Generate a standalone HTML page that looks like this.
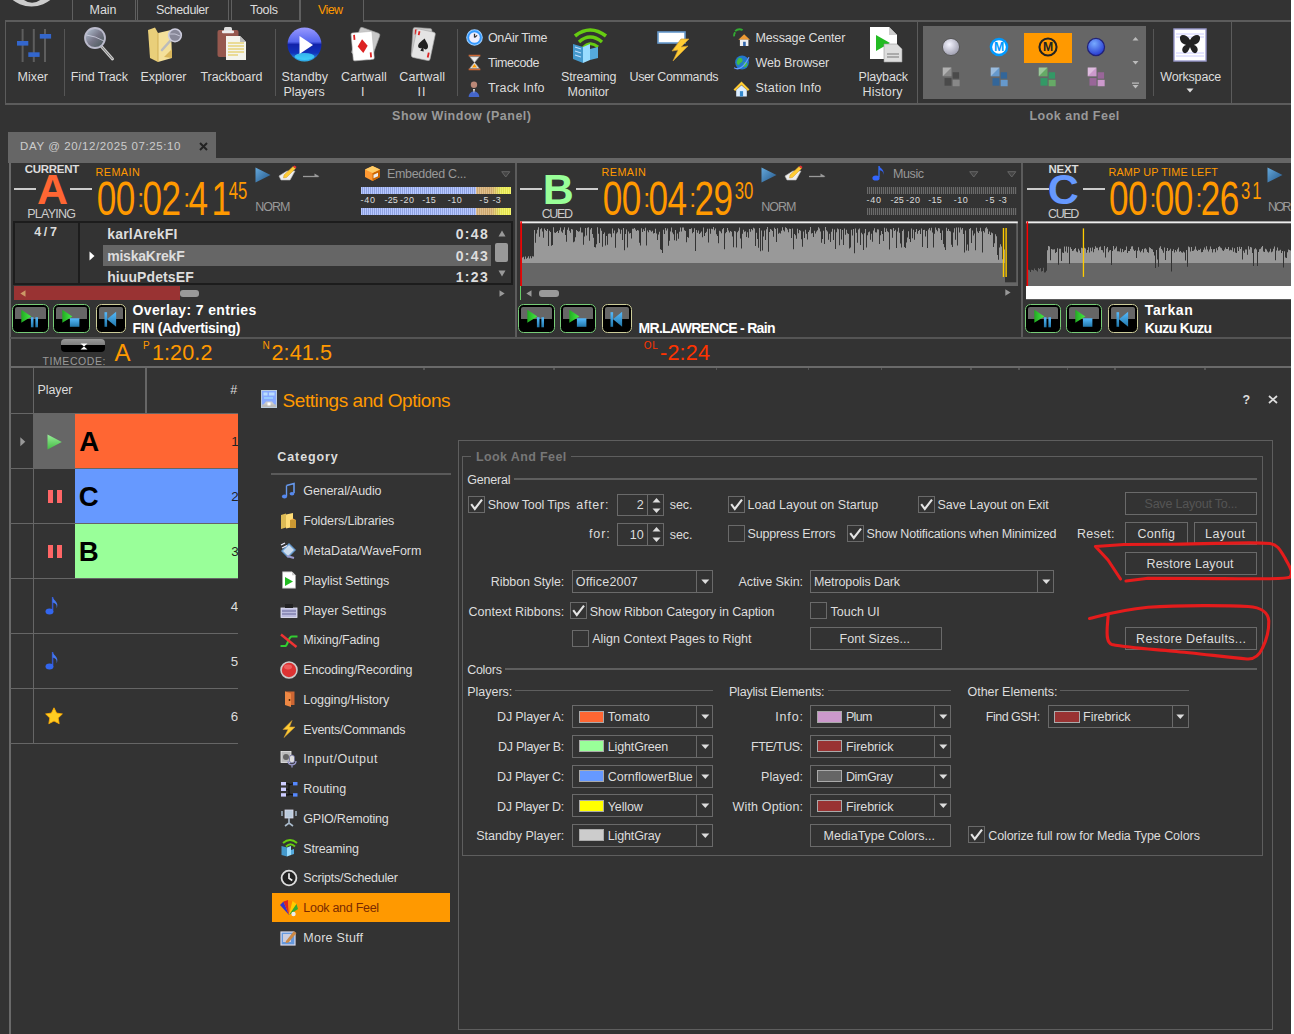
<!DOCTYPE html>
<html lang="en"><head><meta charset="utf-8"><title>Settings and Options</title>
<style>
html,body{margin:0;padding:0}
body{width:1294px;height:1034px;overflow:hidden;background:#333;position:relative;font-family:"Liberation Sans",sans-serif;font-size:12px;color:#ddd}
.a{position:absolute;box-sizing:border-box}
.t{position:absolute;white-space:nowrap}
svg{overflow:visible}
</style></head>
<body>
<!-- ribbon -->
<svg class="a" style="left:0px;top:0px;" width="70" height="10" viewBox="0 0 70 10"><circle cx="31.5" cy="-23.8" r="30.3" fill="#ccc"/><circle cx="32.1" cy="-10.8" r="13.5" fill="#333"/></svg><div class="a" style="left:72px;top:-2px;width:64px;height:23px;border:1px solid #606060;"></div><div class="a" style="left:137px;top:-2px;width:92px;height:23px;border:1px solid #606060;"></div><div class="a" style="left:231px;top:-2px;width:69px;height:23px;border:1px solid #606060;"></div><div class="a" style="left:299.5px;top:-2px;width:64px;height:24px;background:#333;border:1px solid #606060;border-bottom:none;z-index:2"></div><div class="a" style="left:5px;top:20px;width:1300px;height:85px;border:1px solid #666;border-width:2px 0 2px 1px;border-color:#5c5c5c"></div><div class="a" style="left:300.5px;top:20px;width:62px;height:2px;background:#333;z-index:3"></div><span class="t" style="left:89.50px;top:3.72px;font-size:12.5px;line-height:12.5px;color:#ddd;letter-spacing:-0.032px;">Main</span><span class="t" style="left:156.00px;top:3.72px;font-size:12.5px;line-height:12.5px;color:#ddd;letter-spacing:-0.411px;">Scheduler</span><span class="t" style="left:250.00px;top:3.72px;font-size:12.5px;line-height:12.5px;color:#ddd;letter-spacing:-0.295px;">Tools</span><span class="t" style="left:318.00px;top:3.72px;font-size:12.5px;line-height:12.5px;color:#f90;letter-spacing:-0.623px;z-index:4">View</span><div class="a" style="left:917px;top:21px;width:1px;height:83px;background:#5c5c5c;"></div><div class="a" style="left:1231px;top:21px;width:1px;height:83px;background:#5c5c5c;"></div><div class="a" style="left:64px;top:29px;width:1px;height:67px;background:#555;"></div><div class="a" style="left:275px;top:29px;width:1px;height:67px;background:#555;"></div><div class="a" style="left:457px;top:29px;width:1px;height:67px;background:#555;"></div><div class="a" style="left:1153px;top:29px;width:1px;height:67px;background:#555;"></div><svg class="a" style="left:17px;top:28px;" width="35" height="35" viewBox="0 0 35 35"><g><rect x="4.6" y="1" width="2" height="33" fill="#5e5e5e"/><rect x="15.8" y="1" width="2" height="33" fill="#5e5e5e"/><rect x="27" y="1" width="2" height="33" fill="#5e5e5e"/><rect x="0" y="13" width="11.3" height="4.6" fill="#36c"/><rect x="11.3" y="24.3" width="11.3" height="4.6" fill="#36c"/><rect x="22.8" y="6" width="11.3" height="4.6" fill="#36c"/></g></svg><span class="t" style="left:17.50px;top:71.12px;font-size:12.5px;line-height:12.5px;color:#ddd;letter-spacing:-0.014px;">Mixer</span><svg class="a" style="left:83px;top:27px;" width="32" height="32" viewBox="0 0 32 32"><defs><linearGradient id="fl" x1="0" y1="0" x2="1" y2="1"><stop offset="0" stop-color="#bcd"/><stop offset=".5" stop-color="#778"/><stop offset="1" stop-color="#455"/></linearGradient></defs><path d="M18 19 L29.5 32" stroke="#ccc" stroke-width="3" stroke-linecap="round"/><path d="M18 19 L29.5 32" stroke="#777" stroke-width="1"/><circle cx="12" cy="11" r="10" fill="url(#fl)" stroke="#bbc" stroke-width="1.8"/><path d="M3.5 8 Q12 9 21 14" fill="none" stroke="#dde" stroke-width="1" opacity=".7"/></svg><span class="t" style="left:70.80px;top:71.12px;font-size:12.5px;line-height:12.5px;color:#ddd;letter-spacing:-0.128px;">Find Track</span><svg class="a" style="left:147px;top:27px;" width="36" height="36" viewBox="0 0 36 36"><path d="M1 3 L8 0.5 L11 6 L11 35 L3 31z" fill="#e9cf7a"/><path d="M11 6 L24 3 L25 31 L11 35z" fill="#f4e09a"/><path d="M11 6V35" stroke="#c9a64a" stroke-width=".8"/><path d="M17 30 L25 31 25 22z" fill="#d9b65a"/><path d="M15 23 L24 13" stroke="#bbb" stroke-width="2.6" stroke-linecap="round"/><circle cx="28" cy="8.3" r="6.3" fill="#889" stroke="#ccd" stroke-width="1.6"/><path d="M23 7Q28 6 33 9" fill="none" stroke="#dde" stroke-width="1" opacity=".7"/></svg><span class="t" style="left:140.50px;top:71.12px;font-size:12.5px;line-height:12.5px;color:#ddd;letter-spacing:-0.078px;">Explorer</span><svg class="a" style="left:216px;top:27px;" width="32" height="32" viewBox="0 0 32 32"><rect x="1.5" y="3" width="21" height="27" rx="2" fill="#96584e"/><rect x="8" y="0" width="8" height="5" rx="1.5" fill="#ddd"/><rect x="6" y="3.6" width="12" height="2.6" rx="1" fill="#eee"/><path d="M10 9 H24 L30 15 V33 H10z" fill="#f4f4ec"/><path d="M24 9 V15 H30z" fill="#bbb"/><path d="M12 16H28M12 19H28M12 22H28M12 25H28M12 28H22" stroke="#e6d27a" stroke-width="1.6"/></svg><span class="t" style="left:200.50px;top:71.12px;font-size:12.5px;line-height:12.5px;color:#ddd;letter-spacing:-0.084px;">Trackboard</span><svg class="a" style="left:287px;top:27px;" width="35" height="35" viewBox="0 0 35 35"><defs><linearGradient id="sb" x1="0" y1="0" x2="0" y2="1"><stop offset="0" stop-color="#99f"/><stop offset=".42" stop-color="#56e"/><stop offset=".5" stop-color="#12a"/><stop offset=".75" stop-color="#13b"/><stop offset="1" stop-color="#3be"/></linearGradient></defs><circle cx="17.5" cy="17.5" r="17" fill="url(#sb)"/><ellipse cx="17.5" cy="29.5" rx="10" ry="3.5" fill="#4df" opacity=".75"/><path d="M12.5 9 L26 18 L12.5 27z" fill="#fff"/></svg><span class="t" style="left:281.50px;top:71.12px;font-size:12.5px;line-height:12.5px;color:#ddd;letter-spacing:0.122px;">Standby</span><span class="t" style="left:283.50px;top:85.92px;font-size:12.5px;line-height:12.5px;color:#ddd;letter-spacing:-0.080px;">Players</span><svg class="a" style="left:347px;top:27px;" width="34" height="34" viewBox="0 0 34 34"><g transform="rotate(20 17 17)"><rect x="8" y="2" width="21" height="28" rx="2" fill="#c8c8c8" stroke="#999" stroke-width=".6"/></g><g transform="rotate(-5 17 17)"><rect x="5" y="5" width="21" height="28" rx="1.5" fill="#fff" stroke="#bbb" stroke-width=".6"/><path d="M15.5 12 L20.5 19 L15.5 26 L10.5 19z" fill="#d22"/><rect x="7" y="7" width="1.8" height="5" fill="#d22"/><rect x="22" y="26" width="1.8" height="5" fill="#d22"/></g></svg><span class="t" style="left:341.00px;top:71.12px;font-size:12.5px;line-height:12.5px;color:#ddd;letter-spacing:0.107px;">Cartwall</span><span class="t" style="left:361.00px;top:85.92px;font-size:12.5px;line-height:12.5px;color:#ddd;">I</span><svg class="a" style="left:405px;top:27px;" width="34" height="34" viewBox="0 0 34 34"><g transform="rotate(4 17 17)"><rect x="7" y="1" width="19" height="29" rx="2" fill="#ccc" stroke="#999" stroke-width=".6"/><rect x="9" y="3" width="1.8" height="5" fill="#d22"/></g><g transform="rotate(12 17 17)"><rect x="9" y="3" width="19" height="29" rx="2" fill="#e4e4e4" stroke="#aaa" stroke-width=".6"/><path d="M18.5 11 C21 14.5 23.5 16 23.5 19 C23.5 21.8 20.5 22.3 19.3 20.6 L20.2 24 H16.8 L17.7 20.6 C16.5 22.3 13.5 21.8 13.5 19 C13.5 16 16 14.5 18.5 11z" fill="#222"/><rect x="24.5" y="24" width="1.8" height="5" fill="#d22"/><rect x="11" y="5" width="1.8" height="4" fill="#d22"/></g></svg><span class="t" style="left:399.30px;top:71.12px;font-size:12.5px;line-height:12.5px;color:#ddd;letter-spacing:0.093px;">Cartwall</span><span class="t" style="left:417.50px;top:85.92px;font-size:12.5px;line-height:12.5px;color:#ddd;letter-spacing:1.055px;">II</span><svg class="a" style="left:465.5px;top:29.1px;" width="17" height="17" viewBox="0 0 16 16"><circle cx="8" cy="8" r="7.3" fill="#39f" stroke="#9cf" stroke-width="1"/><circle cx="8" cy="8" r="5" fill="#eef"/><path d="M8 8V4.5M8 8L10.5 6" stroke="#333" stroke-width="1.2"/></svg><span class="t" style="left:487.90px;top:31.62px;font-size:12.5px;line-height:12.5px;color:#ddd;letter-spacing:-0.324px;">OnAir Time</span><svg class="a" style="left:465.5px;top:54.2px;" width="17" height="17" viewBox="0 0 16 16"><path d="M2.5 1.5H13.5M2.5 14.5H13.5" stroke="#c63" stroke-width="1.6"/><path d="M3.5 2.5H12.5L8 8 12.5 13.5H3.5L8 8z" fill="#eee" stroke="#999" stroke-width=".7"/><path d="M5.5 12.8L8 9.5 10.5 12.8z" fill="#f90"/></svg><span class="t" style="left:487.90px;top:56.72px;font-size:12.5px;line-height:12.5px;color:#ddd;letter-spacing:-0.403px;">Timecode</span><svg class="a" style="left:465.5px;top:79.5px;" width="17" height="17" viewBox="0 0 16 16"><circle cx="7.5" cy="4.5" r="3" fill="#b87"/><path d="M2.5 16 C2.5 9 12.5 9 12.5 16z" fill="#46c"/><path d="M6.5 8.5h2l-1 4z" fill="#ddd"/></svg><span class="t" style="left:487.90px;top:82.02px;font-size:12.5px;line-height:12.5px;color:#ddd;letter-spacing:0.166px;">Track Info</span><svg class="a" style="left:571px;top:27px;" width="38" height="36" viewBox="0 0 38 36"><path d="M4 9 Q19 -3 35 9" fill="none" stroke="#6c1" stroke-width="3.6"/><path d="M8 15 Q19 5 31 15" fill="none" stroke="#6c1" stroke-width="3.4"/><path d="M12 21 Q19 13 27 20" fill="none" stroke="#6c1" stroke-width="3"/><path d="M2 17 L12 20 V36 L2 32z" fill="#49c"/><path d="M12 20 L19 17 V33 L12 36z" fill="#9df"/><path d="M19 22 L27 20 V31 L19 33z" fill="#5ad"/><path d="M4 20l6 2M4 24l6 2M4 28l6 2" stroke="#bdf" stroke-width="1.2"/></svg><span class="t" style="left:561.00px;top:71.12px;font-size:12.5px;line-height:12.5px;color:#ddd;letter-spacing:-0.184px;">Streaming</span><span class="t" style="left:567.50px;top:85.92px;font-size:12.5px;line-height:12.5px;color:#ddd;letter-spacing:-0.030px;">Monitor</span><svg class="a" style="left:657px;top:31px;" width="34" height="30" viewBox="0 0 34 30"><rect x="1" y="1" width="27" height="11" fill="#fff" stroke="#69c" stroke-width="1.6"/><path d="M24 8 L15 20 L21 19 L16 30 L31 15 L24 16 L32 8z" fill="#fc3" stroke="#c93" stroke-width=".7"/></svg><span class="t" style="left:629.50px;top:71.12px;font-size:12.5px;line-height:12.5px;color:#ddd;letter-spacing:-0.398px;">User Commands</span><svg class="a" style="left:733px;top:29.1px;" width="17" height="17" viewBox="0 0 16 16"><path d="M2 2 A6 6 0 0 1 9 1" fill="none" stroke="#3a3" stroke-width="1.8"/><path d="M1 7 A6 6 0 0 1 2 3" fill="none" stroke="#3a3" stroke-width="1.8"/><path d="M5 10 L10.5 5 L16 10z" fill="#e93"/><rect x="6.5" y="10" width="8" height="6" fill="#eee"/><rect x="9.5" y="12" width="2.5" height="4" fill="#36a"/></svg><span class="t" style="left:755.50px;top:31.62px;font-size:12.5px;line-height:12.5px;color:#ddd;letter-spacing:-0.147px;">Message Center</span><svg class="a" style="left:733px;top:54.2px;" width="17" height="17" viewBox="0 0 16 16"><circle cx="8.5" cy="8" r="6.5" fill="#27c"/><path d="M5 4 C7 3 9 4 9 6 C9 8 6 8 6 10 C5 11 3 9 3.5 7z M10 8 C12 7 14 8 13.5 10 C13 12 11 13 10 12z" fill="#4b4"/><path d="M1 13 Q8 17 15 3" fill="none" stroke="#69f" stroke-width="1.2"/></svg><span class="t" style="left:755.50px;top:56.72px;font-size:12.5px;line-height:12.5px;color:#ddd;letter-spacing:-0.109px;">Web Browser</span><svg class="a" style="left:733px;top:79.5px;" width="17" height="17" viewBox="0 0 16 16"><path d="M0.5 9 L8 1.5 L15.5 9 L14 10.3 L8 4.5 L2 10.3z" fill="#fc3"/><path d="M3 9.5 L8 5 L13 9.5 V15.5 H3z" fill="#def"/><rect x="6.5" y="10.5" width="3" height="5" fill="#38c"/></svg><span class="t" style="left:755.50px;top:82.02px;font-size:12.5px;line-height:12.5px;color:#ddd;letter-spacing:0.233px;">Station Info</span><svg class="a" style="left:869px;top:26px;" width="34" height="37" viewBox="0 0 34 37"><path d="M1 1 H20 L28 9 V33 H1z" fill="#fff"/><path d="M20 1 V9 H28z" fill="#ccc"/><path d="M7 9 L21 17 L7 25z" fill="#2b2"/><path d="M15 18 H28 L33 23 V36 H15z" fill="#ddd" stroke="#999" stroke-width=".6"/><path d="M18 28H30M18 31H30" stroke="#999" stroke-width="1.4"/></svg><span class="t" style="left:858.50px;top:71.12px;font-size:12.5px;line-height:12.5px;color:#ddd;letter-spacing:-0.175px;">Playback</span><span class="t" style="left:862.50px;top:85.92px;font-size:12.5px;line-height:12.5px;color:#ddd;letter-spacing:0.185px;">History</span><div class="a" style="left:923px;top:25.5px;width:223px;height:73.5px;background:#666;"></div><div class="a" style="left:1023.5px;top:33px;width:48.5px;height:29.5px;background:#f90;"></div><svg class="a" style="left:940px;top:36.3px;" width="22" height="22" viewBox="0 0 18 18"><defs><radialGradient id="gs" cx=".4" cy=".35" r=".7"><stop offset="0" stop-color="#f4f4ff"/><stop offset="1" stop-color="#99a"/></radialGradient></defs><circle cx="9" cy="9" r="7" fill="url(#gs)" stroke="#555" stroke-width=".8"/></svg><svg class="a" style="left:940.5px;top:67px;" width="21" height="21" viewBox="0 0 18 18"><rect x="1.5" y="0.5" width="7.5" height="7.5" fill="#888"/><path d="M1.5 .5h7.5L1.5 8z" fill="#fff" opacity=".35"/><rect x="10" y="4.5" width="5.5" height="5.5" fill="#4a4a4a"/><rect x="3" y="9.5" width="6" height="6.5" fill="#4a4a4a"/><rect x="10" y="11" width="6" height="5.5" fill="#888"/></svg><svg class="a" style="left:988px;top:36.3px;" width="22" height="22" viewBox="0 0 18 18"><circle cx="9" cy="9" r="7.6" fill="#09f"/><circle cx="9" cy="9" r="5.6" fill="#fff"/><text x="9" y="12.6" text-anchor="middle" font-family="Liberation Sans, sans-serif" font-weight="bold" font-size="10" fill="#09f">M</text></svg><svg class="a" style="left:988.5px;top:67px;" width="21" height="21" viewBox="0 0 18 18"><rect x="1.5" y="0.5" width="7.5" height="7.5" fill="#69c"/><path d="M1.5 .5h7.5L1.5 8z" fill="#fff" opacity=".35"/><rect x="10" y="4.5" width="5.5" height="5.5" fill="#369"/><rect x="3" y="9.5" width="6" height="6.5" fill="#369"/><rect x="10" y="11" width="6" height="5.5" fill="#69c"/></svg><svg class="a" style="left:1036.5px;top:36.3px;" width="22" height="22" viewBox="0 0 18 18"><circle cx="9" cy="9" r="7" fill="none" stroke="#222" stroke-width="1.7"/><text x="9" y="12.6" text-anchor="middle" font-family="Liberation Sans, sans-serif" font-weight="bold" font-size="10" fill="#222">M</text></svg><svg class="a" style="left:1037px;top:67px;" width="21" height="21" viewBox="0 0 18 18"><rect x="1.5" y="0.5" width="7.5" height="7.5" fill="#6a6"/><path d="M1.5 .5h7.5L1.5 8z" fill="#fff" opacity=".35"/><rect x="10" y="4.5" width="5.5" height="5.5" fill="#396"/><rect x="3" y="9.5" width="6" height="6.5" fill="#396"/><rect x="10" y="11" width="6" height="5.5" fill="#6a6"/></svg><svg class="a" style="left:1085px;top:36.3px;" width="22" height="22" viewBox="0 0 18 18"><defs><radialGradient id="gb" cx=".4" cy=".3" r=".75"><stop offset="0" stop-color="#7af"/><stop offset="1" stop-color="#23c"/></radialGradient></defs><circle cx="9" cy="9" r="7" fill="url(#gb)" stroke="#227" stroke-width="1"/></svg><svg class="a" style="left:1085.5px;top:67px;" width="21" height="21" viewBox="0 0 18 18"><rect x="1.5" y="0.5" width="7.5" height="7.5" fill="#c9c"/><path d="M1.5 .5h7.5L1.5 8z" fill="#fff" opacity=".35"/><rect x="10" y="4.5" width="5.5" height="5.5" fill="#969"/><rect x="3" y="9.5" width="6" height="6.5" fill="#969"/><rect x="10" y="11" width="6" height="5.5" fill="#c9c"/></svg><svg class="a" style="left:1131px;top:34px;" width="9" height="56" viewBox="0 0 9 56"><path d="M1.5 6.5 L4.5 3 L7.5 6.5Z M1.5 27 L4.5 30.5 L7.5 27Z M1 48.5h7v1.2h-7z M1.5 51 L4.5 54.5 L7.5 51Z" fill="#bbb"/></svg><svg class="a" style="left:1173px;top:28px;" width="34" height="34" viewBox="0 0 34 34"><rect x="1" y="1" width="32" height="32" fill="#fff" stroke="#99c" stroke-width="1.4"/><path d="M3 6H31M3 9H31M3 25H31M3 28H31" stroke="#ccf" stroke-width="1"/><path d="M17 12 C14 6 6 5 7 11 C7.5 15 11 16 13 17 C9 18 8 23 11 25 C14 26 16 22 17 19 C18 22 20 26 23 25 C26 23 25 18 21 17 C23 16 26.5 15 27 11 C28 5 20 6 17 12z" fill="#222"/></svg><span class="t" style="left:1160.30px;top:71.12px;font-size:12.5px;line-height:12.5px;color:#ddd;letter-spacing:-0.174px;">Workspace</span><svg class="a" style="left:1186px;top:88px;" width="8" height="5" viewBox="0 0 8 5"><path d="M0.5 0.5h7L4 4.5z" fill="#ddd"/></svg><span class="t" style="left:392.10px;top:110.42px;font-size:12.5px;line-height:12.5px;color:#999;font-weight:bold;letter-spacing:0.509px;">Show Window (Panel)</span><span class="t" style="left:1029.50px;top:110.42px;font-size:12.5px;line-height:12.5px;color:#999;font-weight:bold;letter-spacing:0.480px;">Look and Feel</span><div class="a" style="left:8px;top:132px;width:208px;height:27px;background:#666;"></div><div class="a" style="left:8px;top:158.3px;width:1283px;height:5px;background:#666;"></div><span class="t" style="left:20.10px;top:141.07px;font-size:11.5px;line-height:11.5px;color:#ccc;letter-spacing:0.593px;">DAY @ 20/12/2025 07:25:10</span><svg class="a" style="left:198.5px;top:142px;" width="9" height="9" viewBox="0 0 9 9"><path d="M1 1L8 8M8 1L1 8" stroke="#222" stroke-width="2"/></svg>
<!-- players -->
<div class="a" style="left:9.2px;top:163px;width:1.6px;height:871px;background:#6a6a6a;"></div><div class="a" style="left:514.8px;top:163px;width:1.8px;height:175px;background:#5c5c5c;"></div><div class="a" style="left:1020.9px;top:163px;width:1.8px;height:175px;background:#5c5c5c;"></div><div class="a" style="left:10px;top:337px;width:1281px;height:2px;background:#555;"></div><div class="a" style="left:10px;top:366px;width:1281px;height:2px;background:#6a6a6a;"></div><div class="a" style="left:423px;top:368px;width:1.5px;height:1.5px;background:#555;"></div><div class="a" style="left:553px;top:368px;width:1.5px;height:1.5px;background:#555;"></div><div class="a" style="left:715.5px;top:368px;width:1.5px;height:1.5px;background:#555;"></div><div class="a" style="left:807.7px;top:368px;width:1.5px;height:1.5px;background:#555;"></div><div class="a" style="left:880.7px;top:368px;width:1.5px;height:1.5px;background:#555;"></div><div class="a" style="left:970.3px;top:368px;width:1.5px;height:1.5px;background:#555;"></div><div class="a" style="left:1018px;top:368px;width:1.5px;height:1.5px;background:#555;"></div><div class="a" style="left:1066.6px;top:368px;width:1.5px;height:1.5px;background:#555;"></div><div class="a" style="left:1114.4px;top:368px;width:1.5px;height:1.5px;background:#555;"></div><div class="a" style="left:1204px;top:368px;width:1.5px;height:1.5px;background:#555;"></div><div class="a" style="left:13.6px;top:188.3px;width:22.4px;height:1.6px;background:#ccc;"></div><div class="a" style="left:70px;top:188.3px;width:21.5px;height:1.6px;background:#ccc;"></div><span class="t" style="left:24.80px;top:164.27px;font-size:11.5px;line-height:11.5px;color:#ddd;font-weight:bold;letter-spacing:-0.287px;z-index:2">CURRENT</span><span class="t" style="left:37.00px;top:168.10px;font-size:43px;line-height:43px;color:#f63;font-weight:bold;">A</span><span class="t" style="left:27.20px;top:207.92px;font-size:12.5px;line-height:12.5px;color:#ccc;letter-spacing:-0.743px;">PLAYING</span><span class="t" style="left:95.50px;top:166.66px;font-size:10.8px;line-height:10.8px;color:#f90;letter-spacing:0.439px;">REMAIN</span><svg class="a" style="left:0;top:0" width="1291" height="340" font-family="Liberation Sans, sans-serif"><text transform="translate(96.82 214.80) scale(1 1.349)" font-size="35.2" letter-spacing="-0.6" fill="#f90">00</text><text transform="translate(137.33 207.00) scale(1 1.000)" font-size="25" letter-spacing="0" fill="#f90">:</text><text transform="translate(142.62 214.80) scale(1 1.349)" font-size="35.2" letter-spacing="-0.6" fill="#f90">02</text><text transform="translate(183.33 207.00) scale(1 1.000)" font-size="25" letter-spacing="0" fill="#f90">:</text><text transform="translate(188.62 214.80) scale(1 1.349)" font-size="35.2" letter-spacing="-0.6" fill="#f90">4<tspan dx="4.0">1</tspan></text><text transform="translate(228.80 198.80) scale(1 1.380)" font-size="16.7" letter-spacing="0" fill="#f90">45</text></svg><svg class="a" style="left:255px;top:167px;" width="16" height="16" viewBox="0 0 16 16"><defs><linearGradient id="pb" x1="0" y1="0" x2="1" y2="1"><stop offset="0" stop-color="#6ad"/><stop offset="1" stop-color="#258"/></linearGradient></defs><path d="M.5 .5L15.5 8 .5 15.5z" fill="url(#pb)"/></svg><svg class="a" style="left:278px;top:165px;" width="19" height="17" viewBox="0 0 19 17"><path d="M1 11L9 6H17L12 15H3z" fill="#eee" stroke="#bbb" stroke-width=".6"/><path d="M6 10L15 1.5 17.5 3.5 8.5 12.5 5.5 13z" fill="#fc3" stroke="#c93" stroke-width=".5"/><path d="M15 1.5L17.5 3.5 18.5 2 16.5 .5z" fill="#e33"/></svg><svg class="a" style="left:303px;top:171px;" width="17" height="8" viewBox="0 0 17 8"><path d="M0 5.5H15.5" stroke="#999" stroke-width="1.3"/><path d="M11.5 2.5L16.5 5.5H11.5z" fill="#999"/></svg><span class="t" style="left:255.30px;top:201.42px;font-size:12.5px;line-height:12.5px;color:#999;letter-spacing:-1.063px;">NORM</span><svg class="a" style="left:364px;top:164.5px;" width="17" height="17" viewBox="0 0 17 17"><path d="M8.5 1L16 4.5V12L8.5 16 1 12V4.5z" fill="#f93"/><path d="M8.5 8L16 4.5V12L8.5 16z" fill="#c60"/><path d="M1 4.5L8.5 8 16 4.5 8.5 1z" fill="#fc6"/><rect x="9.5" y="9" width="4.5" height="3.5" fill="#eee" transform="skewY(-25) translate(0 5.3)"/></svg><span class="t" style="left:386.90px;top:168.22px;font-size:12.5px;line-height:12.5px;color:#999;letter-spacing:-0.315px;">Embedded C...</span><div class="a" style="left:361px;top:187px;width:150px;height:7.4px;background:repeating-linear-gradient(90deg,#b8c8ff 0,#b8c8ff 1px,#8ea2e0 1px,#8ea2e0 2px)"></div><div class="a" style="left:476px;top:187px;width:35px;height:7.4px;background:repeating-linear-gradient(90deg,rgba(255,255,255,.18) 0,rgba(255,255,255,.18) 1px,rgba(0,0,0,.06) 1px,rgba(0,0,0,.06) 2px),linear-gradient(90deg,#d8b27c 0,#d8b070 45%,#ecec55 70%,#f4f450 100%)"></div><div class="a" style="left:361px;top:208px;width:150px;height:7.4px;background:repeating-linear-gradient(90deg,#b8c8ff 0,#b8c8ff 1px,#8ea2e0 1px,#8ea2e0 2px)"></div><div class="a" style="left:476px;top:208px;width:35px;height:7.4px;background:repeating-linear-gradient(90deg,rgba(255,255,255,.18) 0,rgba(255,255,255,.18) 1px,rgba(0,0,0,.06) 1px,rgba(0,0,0,.06) 2px),linear-gradient(90deg,#d8b27c 0,#d8b070 45%,#ecec55 70%,#f4f450 100%)"></div><span class="t" style="left:360.40px;top:195.98px;font-size:9px;line-height:9px;color:#ddd;letter-spacing:0.796px;">-40</span><span class="t" style="left:384.50px;top:195.98px;font-size:9px;line-height:9px;color:#ddd;letter-spacing:0.146px;">-25</span><span class="t" style="left:400.00px;top:195.98px;font-size:9px;line-height:9px;color:#ddd;letter-spacing:0.546px;">-20</span><span class="t" style="left:422.30px;top:195.98px;font-size:9px;line-height:9px;color:#ddd;letter-spacing:0.196px;">-15</span><span class="t" style="left:447.80px;top:195.98px;font-size:9px;line-height:9px;color:#ddd;letter-spacing:0.446px;">-10</span><span class="t" style="left:479.30px;top:195.98px;font-size:9px;line-height:9px;color:#ddd;letter-spacing:1.097px;">-5</span><span class="t" style="left:492.60px;top:195.98px;font-size:9px;line-height:9px;color:#ddd;letter-spacing:0.197px;">-3</span><svg class="a" style="left:500.5px;top:170.5px;" width="10" height="7" viewBox="0 0 10 7"><path d="M.7 .7H8.8L4.75 6z" fill="#444" stroke="#666" stroke-width="1"/></svg><div class="a" style="left:12.5px;top:220.8px;width:500.5px;height:64px;border:2px solid #1c1c1c;"></div><div class="a" style="left:78px;top:222px;width:2px;height:62px;background:#1c1c1c;"></div><span class="t" style="left:34.20px;top:226.42px;font-size:12.5px;line-height:12.5px;color:#ddd;font-weight:bold;letter-spacing:2.712px;">4/7</span><div class="a" style="left:103px;top:245px;width:388px;height:20.5px;background:#666;"></div><div class="a" style="left:80px;top:223px;width:432px;height:60px;overflow:hidden"><span class="t" style="left:27.20px;top:4.05px;font-size:14px;line-height:14px;color:#ddd;font-weight:bold;letter-spacing:0.202px;">karlArekFI</span><span class="t" style="left:375.70px;top:4.05px;font-size:14px;line-height:14px;color:#ddd;font-weight:bold;letter-spacing:1.326px;">0:48</span><span class="t" style="left:27.20px;top:26.15px;font-size:14px;line-height:14px;color:#ddd;font-weight:bold;letter-spacing:-0.209px;">miskaKrekF</span><span class="t" style="left:375.70px;top:26.15px;font-size:14px;line-height:14px;color:#ddd;font-weight:bold;letter-spacing:1.326px;">0:43</span><span class="t" style="left:27.20px;top:47.45px;font-size:14px;line-height:14px;color:#ddd;font-weight:bold;letter-spacing:0.094px;">hiuuPdetsEF</span><span class="t" style="left:375.70px;top:47.45px;font-size:14px;line-height:14px;color:#ddd;font-weight:bold;letter-spacing:1.326px;">1:23</span></div><svg class="a" style="left:88.5px;top:250.5px;" width="6" height="10" viewBox="0 0 6 10"><path d="M.5 .5L5.5 5 .5 9.5z" fill="#fff"/></svg><svg class="a" style="left:497.5px;top:229.5px;" width="8" height="7" viewBox="0 0 8 7"><path d="M4 .5L7.5 6.5H.5z" fill="#999"/></svg><div class="a" style="left:495px;top:242.5px;width:12.5px;height:19px;background:#999;border-radius:2px"></div><svg class="a" style="left:497.5px;top:270.3px;" width="8" height="7" viewBox="0 0 8 7"><path d="M.5 .5H7.5L4 6.5z" fill="#999"/></svg><div class="a" style="left:13.5px;top:286px;width:166.5px;height:13.5px;background:#933;"></div><svg class="a" style="left:20px;top:289.5px;" width="6" height="7" viewBox="0 0 6 7"><path d="M5.5 .3V6.7L.3 3.5z" fill="#c96"/></svg><div class="a" style="left:180px;top:290px;width:19px;height:6.5px;background:#999;border-radius:3px"></div><svg class="a" style="left:498.5px;top:289.5px;" width="6" height="7" viewBox="0 0 6 7"><path d="M.5 .3V6.7L5.7 3.5z" fill="#999"/></svg><div class="a" style="left:12px;top:304px;width:37px;height:29px;background:#000;border:1.3px solid #7c7;border-radius:5.5px"></div><div class="a" style="left:15px;top:306.6px;width:31px;height:12.2px;background:#666;border-radius:2px 2px 0 0"></div><svg class="a" style="left:12px;top:304px;" width="37" height="29" viewBox="0 0 37 29"><defs><linearGradient id="gpl" x1="0" y1="0" x2="1" y2="0"><stop offset="0" stop-color="#2a2"/><stop offset="1" stop-color="#4e4"/></linearGradient><linearGradient id="gbl" x1="0" y1="0" x2="0" y2="1"><stop offset="0" stop-color="#5bf"/><stop offset="1" stop-color="#27a"/></linearGradient></defs><path d="M9.3 5.7V18.8L19.4 12.6z" fill="url(#gpl)"/><rect x="18.9" y="13.3" width="2.6" height="10" fill="url(#gbl)"/><rect x="23.4" y="13.3" width="2.6" height="10" fill="url(#gbl)"/></svg><div class="a" style="left:53px;top:304px;width:37px;height:29px;background:#000;border:1.3px solid #7c7;border-radius:5.5px"></div><div class="a" style="left:56px;top:306.6px;width:31px;height:12.2px;background:#666;border-radius:2px 2px 0 0"></div><svg class="a" style="left:53px;top:304px;" width="37" height="29" viewBox="0 0 37 29"><path d="M9.3 5.7V18.8L19.4 12.6z" fill="url(#gpl)"/><rect x="16.9" y="14.3" width="9.5" height="8.5" fill="url(#gbl)"/></svg><div class="a" style="left:96px;top:304px;width:30px;height:29px;background:#000;border:1.3px solid #cc9;border-radius:5.5px"></div><div class="a" style="left:99px;top:306.6px;width:24px;height:12.2px;background:#666;border-radius:2px 2px 0 0"></div><svg class="a" style="left:96px;top:304px;" width="30" height="29" viewBox="0 0 30 29"><rect x="8.5" y="8.2" width="2.6" height="14.6" fill="url(#gbl)"/><path d="M20.1 7.7V22.8L11 15.3z" fill="url(#gbl)"/></svg><span class="t" style="left:132.50px;top:302.55px;font-size:14px;line-height:14px;color:#fff;font-weight:bold;letter-spacing:0.370px;">Overlay: 7 entries</span><span class="t" style="left:132.50px;top:320.65px;font-size:14px;line-height:14px;color:#fff;font-weight:bold;letter-spacing:-0.311px;">FIN (Advertising)</span><div class="a" style="left:519.6px;top:188.3px;width:22.4px;height:1.6px;background:#ccc;"></div><div class="a" style="left:576px;top:188.3px;width:21.5px;height:1.6px;background:#ccc;"></div><span class="t" style="left:542.80px;top:168.10px;font-size:43px;line-height:43px;color:#9f9;font-weight:bold;">B</span><span class="t" style="left:541.70px;top:207.92px;font-size:12.5px;line-height:12.5px;color:#ccc;letter-spacing:-1.340px;">CUED</span><span class="t" style="left:601.50px;top:166.66px;font-size:10.8px;line-height:10.8px;color:#f90;letter-spacing:0.439px;">REMAIN</span><svg class="a" style="left:0;top:0" width="1291" height="340" font-family="Liberation Sans, sans-serif"><text transform="translate(602.82 214.80) scale(1 1.349)" font-size="35.2" letter-spacing="-0.6" fill="#f90">00</text><text transform="translate(643.32 207.00) scale(1 1.000)" font-size="25" letter-spacing="0" fill="#f90">:</text><text transform="translate(648.62 214.80) scale(1 1.349)" font-size="35.2" letter-spacing="-0.6" fill="#f90">04</text><text transform="translate(689.32 207.00) scale(1 1.000)" font-size="25" letter-spacing="0" fill="#f90">:</text><text transform="translate(694.62 214.80) scale(1 1.349)" font-size="35.2" letter-spacing="-0.6" fill="#f90">29</text><text transform="translate(734.80 198.80) scale(1 1.380)" font-size="16.7" letter-spacing="0" fill="#f90">30</text></svg><svg class="a" style="left:761px;top:167px;" width="16" height="16" viewBox="0 0 16 16"><defs><linearGradient id="pb" x1="0" y1="0" x2="1" y2="1"><stop offset="0" stop-color="#6ad"/><stop offset="1" stop-color="#258"/></linearGradient></defs><path d="M.5 .5L15.5 8 .5 15.5z" fill="url(#pb)"/></svg><svg class="a" style="left:784px;top:165px;" width="19" height="17" viewBox="0 0 19 17"><path d="M1 11L9 6H17L12 15H3z" fill="#eee" stroke="#bbb" stroke-width=".6"/><path d="M6 10L15 1.5 17.5 3.5 8.5 12.5 5.5 13z" fill="#fc3" stroke="#c93" stroke-width=".5"/><path d="M15 1.5L17.5 3.5 18.5 2 16.5 .5z" fill="#e33"/></svg><svg class="a" style="left:809px;top:171px;" width="17" height="8" viewBox="0 0 17 8"><path d="M0 5.5H15.5" stroke="#999" stroke-width="1.3"/><path d="M11.5 2.5L16.5 5.5H11.5z" fill="#999"/></svg><span class="t" style="left:761.30px;top:201.42px;font-size:12.5px;line-height:12.5px;color:#999;letter-spacing:-1.063px;">NORM</span><svg class="a" style="left:870px;top:164.5px;" width="17" height="17" viewBox="0 0 17 17"><path d="M9 1V12" stroke="#36c" stroke-width="1.6"/><path d="M9 1C11 4 15 5 13 10C14 6 11 5.5 9 5z" fill="#36f"/><ellipse cx="6" cy="13" rx="3.6" ry="2.6" fill="#36f"/></svg><span class="t" style="left:892.90px;top:168.22px;font-size:12.5px;line-height:12.5px;color:#999;letter-spacing:-0.361px;">Music</span><div class="a" style="left:867px;top:187px;width:150px;height:7.4px;background:repeating-linear-gradient(90deg,#6a6a6a 0,#6a6a6a 1px,#3c3c3c 1px,#3c3c3c 2px)"></div><div class="a" style="left:867px;top:208px;width:150px;height:7.4px;background:repeating-linear-gradient(90deg,#6a6a6a 0,#6a6a6a 1px,#3c3c3c 1px,#3c3c3c 2px)"></div><span class="t" style="left:866.40px;top:195.98px;font-size:9px;line-height:9px;color:#ddd;letter-spacing:0.796px;">-40</span><span class="t" style="left:890.50px;top:195.98px;font-size:9px;line-height:9px;color:#ddd;letter-spacing:0.146px;">-25</span><span class="t" style="left:906.00px;top:195.98px;font-size:9px;line-height:9px;color:#ddd;letter-spacing:0.546px;">-20</span><span class="t" style="left:928.30px;top:195.98px;font-size:9px;line-height:9px;color:#ddd;letter-spacing:0.196px;">-15</span><span class="t" style="left:953.80px;top:195.98px;font-size:9px;line-height:9px;color:#ddd;letter-spacing:0.446px;">-10</span><span class="t" style="left:985.30px;top:195.98px;font-size:9px;line-height:9px;color:#ddd;letter-spacing:1.097px;">-5</span><span class="t" style="left:998.60px;top:195.98px;font-size:9px;line-height:9px;color:#ddd;letter-spacing:0.197px;">-3</span><svg class="a" style="left:969px;top:170.5px;" width="10" height="7" viewBox="0 0 10 7"><path d="M.7 .7H8.8L4.75 6z" fill="#444" stroke="#666" stroke-width="1"/></svg><svg class="a" style="left:1006.5px;top:170.5px;" width="10" height="7" viewBox="0 0 10 7"><path d="M.7 .7H8.8L4.75 6z" fill="#444" stroke="#666" stroke-width="1"/></svg><svg class="a" style="left:0;top:0" width="1291" height="300"><path d="M522 263V257.6h1V256.8h1V259.3h1V256.4h1V258.7h1V257.8h1V256.3h1V258.5h1V256.2h1V258.2h1V256.3h1V256.5h1V230.0h1V242.7h1V233.6h1V229.8h1V227.3h1V236.7h1V229.2h1V228.3h1V231.5h1V237.7h1V228.4h1V230.0h1V231.1h1V229.1h1V245.9h1V230.7h1V232.1h1V245.7h1V245.1h1V227.3h1V232.4h1V233.1h1V231.9h1V231.1h1V232.9h1V230.3h1V227.4h1V231.5h1V232.8h1V229.7h1V227.2h1V235.0h1V241.8h1V229.7h1V227.6h1V230.8h1V232.7h1V228.9h1V229.5h1V242.2h1V241.4h1V237.2h1V229.9h1V231.0h1V231.8h1V231.3h1V227.4h1V232.5h1V232.6h1V244.7h1V236.4h1V228.1h1V235.5h1V227.7h1V227.2h1V240.8h1V229.4h1V227.9h1V234.0h1V237.8h1V247.0h1V247.4h1V244.3h1V227.2h1V233.8h1V243.0h1V228.2h1V230.7h1V246.7h1V233.9h1V232.6h1V245.4h1V235.9h1V244.7h1V233.7h1V233.6h1V233.7h1V237.3h1V228.4h1V233.3h1V230.4h1V247.8h1V233.4h1V232.3h1V228.2h1V229.3h1V233.8h1V229.8h1V239.9h1V228.1h1V250.2h1V233.9h1V229.5h1V247.5h1V231.5h1V233.5h1V233.1h1V238.6h1V228.7h1V228.8h1V227.9h1V229.5h1V231.1h1V229.9h1V230.5h1V242.8h1V245.5h1V228.2h1V232.1h1V229.3h1V230.9h1V227.7h1V245.6h1V230.6h1V232.3h1V230.1h1V230.5h1V231.8h1V230.7h1V233.6h1V233.1h1V228.8h1V233.6h1V240.1h1V234.5h1V231.7h1V249.3h1V250.0h1V253.1h1V229.8h1V233.9h1V228.1h1V230.6h1V228.4h1V245.8h1V240.7h1V231.4h1V227.5h1V232.5h1V234.3h1V240.3h1V230.0h1V240.8h1V233.4h1V238.7h1V231.8h1V227.5h1V231.4h1V227.6h1V227.5h1V230.2h1V230.9h1V242.3h1V236.9h1V237.7h1V229.1h1V229.0h1V228.2h1V233.3h1V232.1h1V228.3h1V251.0h1V230.0h1V232.8h1V230.5h1V233.9h1V232.8h1V231.5h1V237.3h1V227.5h1V236.0h1V232.9h1V231.7h1V228.7h1V242.5h1V228.8h1V233.8h1V228.7h1V229.2h1V227.0h1V230.3h1V228.4h1V234.3h1V236.1h1V243.3h1V230.7h1V231.6h1V233.2h1V229.3h1V228.0h1V249.2h1V233.2h1V232.1h1V228.0h1V230.5h1V232.6h1V231.1h1V231.8h1V236.5h1V247.2h1V230.9h1V231.4h1V247.6h1V232.2h1V230.7h1V227.5h1V238.5h1V248.5h1V233.8h1V229.7h1V231.8h1V231.3h1V237.1h1V232.2h1V237.8h1V228.9h1V231.8h1V229.0h1V230.3h1V227.8h1V228.4h1V246.0h1V232.7h1V239.1h1V247.8h1V228.0h1V251.2h1V230.6h1V250.5h1V236.5h1V230.4h1V239.9h1V229.2h1V227.0h1V251.8h1V232.0h1V229.0h1V229.8h1V231.1h1V236.7h1V227.7h1V229.0h1V241.9h1V228.3h1V233.7h1V232.7h1V233.4h1V230.8h1V227.3h1V230.2h1V231.5h1V227.3h1V227.9h1V229.4h1V232.2h1V228.8h1V229.1h1V238.0h1V228.5h1V249.2h1V234.0h1V235.2h1V238.7h1V228.8h1V233.2h1V229.9h1V230.7h1V239.3h1V246.8h1V231.4h1V238.0h1V229.8h1V233.7h1V239.6h1V232.0h1V230.3h1V227.0h1V233.5h1V233.0h1V236.9h1V230.7h1V233.6h1V231.5h1V230.2h1V227.3h1V228.6h1V231.5h1V242.8h1V238.9h1V230.7h1V244.1h1V227.1h1V230.2h1V231.5h1V239.8h1V233.7h1V242.1h1V231.7h1V228.8h1V240.0h1V229.4h1V248.9h1V232.2h1V228.4h1V229.2h1V245.3h1V229.1h1V239.6h1V229.9h1V245.1h1V228.5h1V234.8h1V229.8h1V233.2h1V234.0h1V248.4h1V247.5h1V229.7h1V235.4h1V229.0h1V253.2h1V228.5h1V232.8h1V242.7h1V229.6h1V228.4h1V245.0h1V232.7h1V234.2h1V249.9h1V233.3h1V228.9h1V247.4h1V235.3h1V232.3h1V231.4h1V239.8h1V233.7h1V241.7h1V230.5h1V228.3h1V232.2h1V232.4h1V229.3h1V229.5h1V244.1h1V235.2h1V230.9h1V233.9h1V241.1h1V227.7h1V232.0h1V228.6h1V231.3h1V232.2h1V249.4h1V229.1h1V229.6h1V237.8h1V228.1h1V231.0h1V229.8h1V247.9h1V231.6h1V227.7h1V232.7h1V243.5h1V247.5h1V231.1h1V229.6h1V247.0h1V248.0h1V242.5h1V237.6h1V231.2h1V239.0h1V242.1h1V228.4h1V238.3h1V229.8h1V239.8h1V231.9h1V229.0h1V233.7h1V231.0h1V229.9h1V234.0h1V228.4h1V247.0h1V230.0h1V229.8h1V236.4h1V230.9h1V248.1h1V229.6h1V228.0h1V230.6h1V227.8h1V232.6h1V247.6h1V233.8h1V227.4h1V229.7h1V231.3h1V228.1h1V228.6h1V232.9h1V239.9h1V230.6h1V244.0h1V247.2h1V250.0h1V227.8h1V230.9h1V229.1h1V231.1h1V231.6h1V244.7h1V247.1h1V232.5h1V228.3h1V239.8h1V227.6h1V245.5h1V227.6h1V232.4h1V227.4h1V229.6h1V228.0h1V234.0h1V252.4h1V230.4h1V250.4h1V244.4h1V250.8h1V228.9h1V228.0h1V243.1h1V230.5h1V235.5h1V233.6h1V250.3h1V227.8h1V231.5h1V233.1h1V231.1h1V227.7h1V231.4h1V252.5h1V231.0h1V232.4h1V228.2h1V227.3h1V228.8h1V233.9h1V231.6h1V235.1h1V232.6h1V233.2h1V246.9h1V243.3h1V234.2h1V236.3h1V254.9h1V259.7h1V247.6h1V244.3h1V246.6h1V259.3h1V247.7h1V249.5h1V263Z" fill="#999"/><path d="M522 286V263.0h1V263.0h1V263.0h1V263.0h1V263.0h1V263.0h1V263.0h1V263.0h1V263.0h1V263.0h1V263.0h1V263.0h1V263.0h1V263.0h1V263.0h1V263.0h1V263.0h1V263.0h1V263.0h1V263.0h1V263.0h1V263.0h1V263.0h1V263.0h1V263.0h1V263.0h1V263.0h1V263.0h1V263.0h1V263.0h1V263.0h1V263.0h1V263.0h1V263.0h1V263.0h1V263.0h1V263.0h1V263.0h1V263.0h1V263.0h1V263.0h1V263.0h1V263.0h1V263.0h1V263.0h1V263.0h1V263.0h1V263.0h1V263.0h1V263.0h1V263.0h1V263.0h1V263.0h1V263.0h1V263.0h1V263.0h1V263.0h1V263.0h1V263.0h1V263.0h1V263.0h1V263.0h1V263.0h1V263.0h1V263.0h1V263.0h1V263.0h1V263.0h1V263.0h1V263.0h1V263.0h1V263.0h1V263.0h1V263.0h1V263.0h1V263.0h1V263.0h1V263.0h1V263.0h1V263.0h1V263.0h1V263.0h1V263.0h1V263.0h1V263.0h1V263.0h1V263.0h1V263.0h1V263.0h1V263.0h1V263.0h1V263.0h1V263.0h1V263.0h1V263.0h1V263.0h1V263.0h1V263.0h1V263.0h1V263.0h1V263.0h1V263.0h1V263.0h1V263.0h1V263.0h1V263.0h1V263.0h1V263.0h1V263.0h1V263.0h1V263.0h1V263.0h1V263.0h1V263.0h1V263.0h1V263.0h1V263.0h1V263.0h1V263.0h1V263.0h1V263.0h1V263.0h1V263.0h1V263.0h1V263.0h1V263.0h1V263.0h1V263.0h1V263.0h1V263.0h1V263.0h1V263.0h1V263.0h1V263.0h1V263.0h1V263.0h1V263.0h1V263.0h1V263.0h1V263.0h1V263.0h1V263.0h1V263.0h1V263.0h1V263.0h1V263.0h1V263.0h1V263.0h1V263.0h1V263.0h1V263.0h1V263.0h1V263.0h1V263.0h1V263.0h1V263.0h1V263.0h1V263.0h1V263.0h1V263.0h1V263.0h1V263.0h1V263.0h1V263.0h1V263.0h1V263.0h1V263.0h1V263.0h1V263.0h1V263.0h1V263.0h1V263.0h1V263.0h1V263.0h1V263.0h1V263.0h1V263.0h1V263.0h1V263.0h1V263.0h1V263.0h1V263.0h1V263.0h1V263.0h1V263.0h1V263.0h1V263.0h1V263.0h1V263.0h1V263.0h1V263.0h1V263.0h1V263.0h1V263.0h1V263.0h1V263.0h1V263.0h1V263.0h1V263.0h1V263.0h1V263.0h1V263.0h1V263.0h1V263.0h1V263.0h1V263.0h1V263.0h1V263.0h1V263.0h1V263.0h1V263.0h1V263.0h1V263.0h1V263.0h1V263.0h1V263.0h1V263.0h1V263.0h1V263.0h1V263.0h1V263.0h1V263.0h1V263.0h1V263.0h1V263.0h1V263.0h1V263.0h1V263.0h1V263.0h1V263.0h1V263.0h1V263.0h1V263.0h1V263.0h1V263.0h1V263.0h1V263.0h1V263.0h1V263.0h1V263.0h1V263.0h1V263.0h1V263.0h1V263.0h1V263.0h1V263.0h1V263.0h1V263.0h1V263.0h1V263.0h1V263.0h1V263.0h1V263.0h1V263.0h1V263.0h1V263.0h1V263.0h1V263.0h1V263.0h1V263.0h1V263.0h1V263.0h1V263.0h1V263.0h1V263.0h1V263.0h1V263.0h1V263.0h1V263.0h1V263.0h1V263.0h1V263.0h1V263.0h1V263.0h1V263.0h1V263.0h1V263.0h1V263.0h1V263.0h1V263.0h1V263.0h1V263.0h1V263.0h1V263.0h1V263.0h1V263.0h1V263.0h1V263.0h1V263.0h1V263.0h1V263.0h1V263.0h1V263.0h1V263.0h1V263.0h1V263.0h1V263.0h1V263.0h1V263.0h1V263.0h1V263.0h1V263.0h1V263.0h1V263.0h1V263.0h1V263.0h1V263.0h1V263.0h1V263.0h1V263.0h1V263.0h1V263.0h1V263.0h1V263.0h1V263.0h1V263.0h1V263.0h1V263.0h1V263.0h1V263.0h1V263.0h1V263.0h1V263.0h1V263.0h1V263.0h1V263.0h1V263.0h1V263.0h1V263.0h1V263.0h1V263.0h1V263.0h1V263.0h1V263.0h1V263.0h1V263.0h1V263.0h1V263.0h1V263.0h1V263.0h1V263.0h1V263.0h1V263.0h1V263.0h1V263.0h1V263.0h1V263.0h1V263.0h1V263.0h1V263.0h1V263.0h1V263.0h1V263.0h1V263.0h1V263.0h1V263.0h1V263.0h1V263.0h1V263.0h1V263.0h1V263.0h1V263.0h1V263.0h1V263.0h1V263.0h1V263.0h1V263.0h1V263.0h1V263.0h1V263.0h1V263.0h1V263.0h1V263.0h1V263.0h1V263.0h1V263.0h1V263.0h1V263.0h1V263.0h1V263.0h1V263.0h1V263.0h1V263.0h1V263.0h1V263.0h1V263.0h1V263.0h1V263.0h1V263.0h1V263.0h1V263.0h1V263.0h1V263.0h1V263.0h1V263.0h1V263.0h1V263.0h1V263.0h1V263.0h1V263.0h1V263.0h1V263.0h1V263.0h1V263.0h1V263.0h1V263.0h1V263.0h1V263.0h1V263.0h1V263.0h1V263.0h1V263.0h1V263.0h1V263.0h1V263.0h1V263.0h1V263.0h1V263.0h1V263.0h1V263.0h1V263.0h1V263.0h1V263.0h1V263.0h1V263.0h1V263.0h1V263.0h1V263.0h1V263.0h1V263.0h1V263.0h1V263.0h1V263.0h1V263.0h1V263.0h1V263.0h1V263.0h1V263.0h1V263.0h1V263.0h1V263.0h1V263.0h1V263.0h1V263.0h1V263.0h1V263.0h1V263.0h1V263.0h1V263.0h1V263.0h1V263.0h1V263.0h1V263.0h1V263.0h1V263.0h1V263.0h1V263.0h1V263.0h1V263.0h1V263.0h1V263.0h1V263.0h1V263.0h1V263.0h1V263.0h1V263.0h1V263.0h1V263.0h1V263.0h1V263.0h1V263.0h1V263.0h1V263.0h1V263.0h1V263.0h1V263.0h1V263.0h1V263.0h1V263.0h1V263.0h1V263.0h1V263.0h1V263.0h1V286Z" fill="#666"/><rect x="1005" y="282.3" width="13" height="3.7" fill="#666"/><rect x="1016.3" y="223" width="1.6" height="63" fill="#666"/><rect x="520" y="221.4" width="497.8" height="1.9" fill="#eee"/><rect x="520.3" y="221.4" width="1.6" height="64.6" fill="#f00"/><rect x="1002.8" y="228" width="1.4" height="49" fill="#fc0"/><rect x="1005.4" y="228" width="1.4" height="49" fill="#fc0"/></svg><div class="a" style="left:519.5px;top:286px;width:1.2px;height:13.5px;background:#6c6;"></div><svg class="a" style="left:526px;top:289.5px;" width="6" height="7" viewBox="0 0 6 7"><path d="M5.5 .3V6.7L.3 3.5z" fill="#999"/></svg><div class="a" style="left:539px;top:290px;width:19.5px;height:6.5px;background:#999;border-radius:3px"></div><svg class="a" style="left:1005px;top:289.3px;" width="6" height="7" viewBox="0 0 6 7"><path d="M.3 .2V6.8L5.6 3.5z" fill="#999"/></svg><div class="a" style="left:518px;top:304px;width:37px;height:29px;background:#000;border:1.3px solid #7c7;border-radius:5.5px"></div><div class="a" style="left:521px;top:306.6px;width:31px;height:12.2px;background:#666;border-radius:2px 2px 0 0"></div><svg class="a" style="left:518px;top:304px;" width="37" height="29" viewBox="0 0 37 29"><defs><linearGradient id="gpl" x1="0" y1="0" x2="1" y2="0"><stop offset="0" stop-color="#2a2"/><stop offset="1" stop-color="#4e4"/></linearGradient><linearGradient id="gbl" x1="0" y1="0" x2="0" y2="1"><stop offset="0" stop-color="#5bf"/><stop offset="1" stop-color="#27a"/></linearGradient></defs><path d="M9.3 5.7V18.8L19.4 12.6z" fill="url(#gpl)"/><rect x="18.9" y="13.3" width="2.6" height="10" fill="url(#gbl)"/><rect x="23.4" y="13.3" width="2.6" height="10" fill="url(#gbl)"/></svg><div class="a" style="left:559.7px;top:304px;width:36.8px;height:29px;background:#000;border:1.3px solid #7c7;border-radius:5.5px"></div><div class="a" style="left:562.7px;top:306.6px;width:30.8px;height:12.2px;background:#666;border-radius:2px 2px 0 0"></div><svg class="a" style="left:559.7px;top:304px;" width="36.8" height="29" viewBox="0 0 36.8 29"><path d="M9.3 5.7V18.8L19.4 12.6z" fill="url(#gpl)"/><rect x="16.9" y="14.3" width="9.5" height="8.5" fill="url(#gbl)"/></svg><div class="a" style="left:602px;top:304px;width:30px;height:29px;background:#000;border:1.3px solid #cc9;border-radius:5.5px"></div><div class="a" style="left:605px;top:306.6px;width:24px;height:12.2px;background:#666;border-radius:2px 2px 0 0"></div><svg class="a" style="left:602px;top:304px;" width="30" height="29" viewBox="0 0 30 29"><rect x="8.5" y="8.2" width="2.6" height="14.6" fill="url(#gbl)"/><path d="M20.1 7.7V22.8L11 15.3z" fill="url(#gbl)"/></svg><span class="t" style="left:638.50px;top:320.65px;font-size:14px;line-height:14px;color:#fff;font-weight:bold;letter-spacing:-0.680px;">MR.LAWRENCE - Rain</span><div class="a" style="left:1026.6px;top:188.3px;width:22.4px;height:1.6px;background:#ccc;"></div><div class="a" style="left:1083px;top:188.3px;width:21.5px;height:1.6px;background:#ccc;"></div><span class="t" style="left:1048.50px;top:164.27px;font-size:11.5px;line-height:11.5px;color:#ddd;font-weight:bold;letter-spacing:-0.224px;z-index:2">NEXT</span><span class="t" style="left:1047.70px;top:168.10px;font-size:43px;line-height:43px;color:#69f;font-weight:bold;">C</span><span class="t" style="left:1048.10px;top:207.92px;font-size:12.5px;line-height:12.5px;color:#ccc;letter-spacing:-1.407px;">CUED</span><span class="t" style="left:1108.50px;top:166.66px;font-size:10.8px;line-height:10.8px;color:#f90;letter-spacing:0.154px;">RAMP UP TIME LEFT</span><svg class="a" style="left:0;top:0" width="1291" height="340" font-family="Liberation Sans, sans-serif"><text transform="translate(1109.02 214.80) scale(1 1.349)" font-size="35.2" letter-spacing="-0.6" fill="#f90">00</text><text transform="translate(1149.53 207.00) scale(1 1.000)" font-size="25" letter-spacing="0" fill="#f90">:</text><text transform="translate(1154.82 214.80) scale(1 1.349)" font-size="35.2" letter-spacing="-0.6" fill="#f90">00</text><text transform="translate(1195.53 207.00) scale(1 1.000)" font-size="25" letter-spacing="0" fill="#f90">:</text><text transform="translate(1200.82 214.80) scale(1 1.349)" font-size="35.2" letter-spacing="-0.6" fill="#f90">26</text><text transform="translate(1241.00 198.80) scale(1 1.380)" font-size="16.7" letter-spacing="0" fill="#f90">3<tspan dx="1.9">1</tspan></text></svg><svg class="a" style="left:1267px;top:167px;" width="16" height="16" viewBox="0 0 16 16"><defs><linearGradient id="pb" x1="0" y1="0" x2="1" y2="1"><stop offset="0" stop-color="#6ad"/><stop offset="1" stop-color="#258"/></linearGradient></defs><path d="M.5 .5L15.5 8 .5 15.5z" fill="url(#pb)"/></svg><span class="t" style="left:1268.00px;top:201.42px;font-size:12.5px;line-height:12.5px;color:#999;letter-spacing:-2.139px;">NOR</span><svg class="a" style="left:0;top:0" width="1291" height="300"><path d="M1028 263V263.0h1V263.0h1V263.0h1V263.0h1V263.0h1V263.0h1V263.0h1V263.0h1V263.0h1V263.0h1V263.0h1V263.0h1V263.0h1V263.0h1V263.0h1V263.0h1V263.0h1V263.0h1V263.0h1V250.3h1V246.1h1V246.4h1V260.2h1V249.1h1V249.6h1V249.5h1V249.2h1V253.0h1V251.9h1V248.2h1V263.0h1V248.8h1V248.7h1V260.9h1V252.4h1V252.9h1V246.5h1V251.4h1V246.6h1V252.7h1V246.8h1V263.0h1V247.2h1V249.1h1V251.1h1V250.5h1V248.9h1V247.9h1V251.6h1V252.2h1V248.8h1V250.5h1V252.9h1V247.8h1V248.3h1V260.7h1V247.7h1V248.6h1V252.7h1V250.0h1V247.3h1V252.4h1V247.7h1V251.2h1V247.4h1V252.2h1V249.0h1V246.3h1V247.7h1V247.8h1V250.2h1V247.2h1V246.5h1V249.9h1V250.3h1V252.4h1V246.1h1V257.6h1V248.6h1V246.9h1V252.2h1V250.6h1V250.1h1V263.0h1V250.9h1V246.1h1V249.4h1V248.2h1V246.5h1V251.2h1V251.2h1V251.6h1V248.5h1V252.3h1V248.9h1V252.0h1V250.4h1V250.1h1V246.6h1V253.0h1V251.1h1V251.1h1V249.1h1V246.6h1V246.2h1V249.4h1V250.9h1V250.3h1V258.0h1V250.7h1V247.2h1V250.6h1V252.2h1V250.7h1V249.0h1V252.4h1V248.7h1V248.2h1V249.5h1V251.9h1V252.7h1V247.2h1V247.9h1V248.9h1V249.5h1V251.9h1V255.6h1V263.0h1V250.0h1V259.4h1V263.0h1V247.7h1V246.3h1V249.1h1V250.6h1V252.7h1V247.4h1V259.9h1V251.0h1V247.9h1V250.9h1V250.3h1V248.8h1V263.0h1V251.1h1V249.2h1V252.4h1V250.0h1V251.6h1V249.2h1V247.4h1V251.7h1V251.0h1V252.3h1V252.8h1V251.5h1V252.4h1V260.6h1V249.9h1V263.0h1V246.4h1V247.2h1V251.5h1V247.0h1V251.1h1V250.8h1V249.4h1V246.6h1V249.7h1V251.1h1V249.7h1V249.9h1V248.7h1V252.3h1V252.0h1V249.7h1V247.4h1V249.5h1V246.2h1V249.6h1V251.6h1V249.4h1V246.5h1V248.9h1V252.5h1V249.3h1V249.0h1V252.3h1V248.2h1V250.3h1V246.9h1V246.2h1V247.6h1V248.3h1V250.3h1V251.1h1V249.6h1V247.4h1V249.1h1V248.9h1V247.1h1V250.4h1V249.7h1V250.3h1V247.6h1V251.7h1V248.2h1V252.5h1V253.0h1V246.9h1V251.1h1V246.7h1V249.0h1V246.9h1V259.6h1V250.8h1V252.8h1V249.5h1V249.5h1V254.8h1V246.3h1V249.6h1V247.0h1V247.4h1V252.9h1V263.0h1V249.2h1V248.3h1V249.6h1V263.0h1V251.9h1V249.2h1V248.8h1V247.2h1V246.1h1V251.6h1V252.0h1V248.8h1V249.5h1V251.6h1V252.4h1V251.4h1V248.8h1V252.2h1V251.4h1V248.8h1V246.5h1V260.3h1V250.5h1V247.6h1V250.7h1V250.6h1V249.7h1V253.0h1V250.9h1V263.0h1V251.2h1V257.5h1V258.1h1V252.3h1V249.6h1V250.0h1V250.5h1V246.5h1V263Z" fill="#999"/><path d="M1028 286V269.8h1V270.3h1V272.1h1V269.8h1V270.0h1V270.4h1V268.4h1V270.1h1V270.6h1V271.5h1V268.0h1V269.0h1V268.0h1V271.5h1V271.0h1V267.7h1V272.4h1V272.3h1V270.8h1V263.0h1V263.0h1V263.0h1V263.0h1V263.0h1V263.0h1V263.0h1V263.0h1V263.0h1V263.0h1V263.0h1V264.8h1V263.0h1V263.0h1V263.0h1V263.0h1V263.0h1V263.0h1V263.0h1V263.0h1V263.0h1V263.0h1V263.9h1V263.0h1V263.0h1V263.0h1V263.0h1V263.0h1V263.0h1V263.0h1V263.0h1V263.0h1V263.0h1V263.0h1V263.0h1V263.0h1V263.0h1V263.0h1V263.0h1V263.0h1V263.0h1V263.0h1V263.0h1V263.0h1V263.0h1V263.0h1V263.0h1V263.0h1V263.0h1V263.0h1V263.0h1V263.0h1V263.0h1V263.0h1V263.0h1V263.0h1V263.0h1V263.0h1V263.0h1V263.0h1V263.0h1V263.0h1V263.0h1V263.0h1V265.0h1V263.0h1V263.0h1V263.0h1V263.0h1V263.0h1V263.0h1V263.0h1V263.0h1V263.0h1V263.0h1V263.0h1V263.0h1V263.0h1V263.0h1V263.0h1V263.0h1V263.0h1V263.0h1V263.0h1V263.0h1V263.0h1V263.0h1V263.0h1V263.0h1V263.0h1V263.0h1V263.0h1V263.0h1V263.0h1V263.0h1V263.0h1V263.0h1V263.0h1V263.0h1V263.0h1V263.0h1V263.0h1V263.0h1V263.0h1V263.0h1V263.0h1V263.0h1V263.0h1V268.0h1V263.0h1V263.0h1V266.8h1V263.0h1V263.0h1V263.0h1V263.0h1V263.0h1V263.0h1V263.0h1V263.0h1V263.0h1V263.0h1V263.0h1V263.0h1V271.4h1V263.0h1V263.0h1V263.0h1V263.0h1V263.0h1V263.0h1V263.0h1V263.0h1V263.0h1V263.0h1V263.0h1V263.0h1V263.0h1V263.0h1V263.0h1V266.7h1V263.0h1V263.0h1V263.0h1V263.0h1V263.0h1V263.0h1V263.0h1V263.0h1V263.0h1V263.0h1V263.0h1V263.0h1V263.0h1V263.0h1V263.0h1V263.0h1V263.0h1V263.0h1V263.0h1V263.0h1V263.0h1V263.0h1V263.0h1V263.0h1V263.0h1V263.0h1V263.0h1V263.0h1V263.0h1V263.0h1V263.0h1V263.0h1V263.0h1V263.0h1V263.0h1V263.0h1V263.0h1V263.0h1V263.0h1V263.0h1V263.0h1V263.0h1V263.0h1V263.0h1V263.0h1V263.0h1V263.0h1V263.0h1V263.0h1V263.0h1V263.0h1V263.0h1V263.0h1V263.0h1V263.0h1V263.0h1V263.0h1V263.0h1V263.0h1V263.0h1V263.0h1V263.0h1V263.0h1V263.0h1V263.0h1V266.0h1V263.0h1V263.0h1V263.0h1V266.0h1V263.0h1V263.0h1V263.0h1V263.0h1V263.0h1V263.0h1V263.0h1V263.0h1V263.0h1V263.0h1V263.0h1V263.0h1V263.0h1V263.0h1V263.0h1V263.0h1V263.0h1V263.0h1V263.0h1V263.0h1V263.0h1V263.0h1V263.0h1V263.0h1V263.0h1V267.5h1V263.0h1V263.0h1V263.0h1V263.0h1V263.0h1V263.0h1V263.0h1V263.0h1V286Z" fill="#666"/><rect x="1026" y="221.4" width="265" height="1.9" fill="#eee"/><rect x="1026.6" y="221.4" width="1.5" height="64.6" fill="#f00"/><rect x="1082.8" y="228.4" width="1.3" height="48.5" fill="#fc0"/><rect x="1026" y="286" width="265" height="13.2" fill="#fff"/></svg><div class="a" style="left:1024.5px;top:304px;width:36.5px;height:29px;background:#000;border:1.3px solid #7c7;border-radius:5.5px"></div><div class="a" style="left:1027.5px;top:306.6px;width:30.5px;height:12.2px;background:#666;border-radius:2px 2px 0 0"></div><svg class="a" style="left:1024.5px;top:304px;" width="36.5" height="29" viewBox="0 0 36.5 29"><defs><linearGradient id="gpl" x1="0" y1="0" x2="1" y2="0"><stop offset="0" stop-color="#2a2"/><stop offset="1" stop-color="#4e4"/></linearGradient><linearGradient id="gbl" x1="0" y1="0" x2="0" y2="1"><stop offset="0" stop-color="#5bf"/><stop offset="1" stop-color="#27a"/></linearGradient></defs><path d="M9.3 5.7V18.8L19.4 12.6z" fill="url(#gpl)"/><rect x="18.9" y="13.3" width="2.6" height="10" fill="url(#gbl)"/><rect x="23.4" y="13.3" width="2.6" height="10" fill="url(#gbl)"/></svg><div class="a" style="left:1065.8px;top:304px;width:36.7px;height:29px;background:#000;border:1.3px solid #7c7;border-radius:5.5px"></div><div class="a" style="left:1068.8px;top:306.6px;width:30.7px;height:12.2px;background:#666;border-radius:2px 2px 0 0"></div><svg class="a" style="left:1065.8px;top:304px;" width="36.7" height="29" viewBox="0 0 36.7 29"><path d="M9.3 5.7V18.8L19.4 12.6z" fill="url(#gpl)"/><rect x="16.9" y="14.3" width="9.5" height="8.5" fill="url(#gbl)"/></svg><div class="a" style="left:1108px;top:304px;width:30px;height:29px;background:#000;border:1.3px solid #cc9;border-radius:5.5px"></div><div class="a" style="left:1111px;top:306.6px;width:24px;height:12.2px;background:#666;border-radius:2px 2px 0 0"></div><svg class="a" style="left:1108px;top:304px;" width="30" height="29" viewBox="0 0 30 29"><rect x="8.5" y="8.2" width="2.6" height="14.6" fill="url(#gbl)"/><path d="M20.1 7.7V22.8L11 15.3z" fill="url(#gbl)"/></svg><span class="t" style="left:1144.80px;top:302.55px;font-size:14px;line-height:14px;color:#fff;font-weight:bold;letter-spacing:0.626px;">Tarkan</span><span class="t" style="left:1144.80px;top:320.65px;font-size:14px;line-height:14px;color:#fff;font-weight:bold;letter-spacing:-0.627px;">Kuzu Kuzu</span><div class="a" style="left:61px;top:339px;width:44px;height:12.5px;background:#000;border-radius:4px;background:linear-gradient(#999 0,#808080 44%,#000 46%)"></div><svg class="a" style="left:79.5px;top:342.5px;" width="8" height="7" viewBox="0 0 8 7"><path d="M.5 .5H7.5L4 3.5 7.5 6.5H.5L4 3.5z" fill="#fff"/></svg><span class="t" style="left:42.50px;top:355.81px;font-size:10.5px;line-height:10.5px;color:#999;letter-spacing:0.583px;">TIMECODE:</span><span class="t" style="left:114.40px;top:340.68px;font-size:24px;line-height:24px;color:#f90;">A</span><span class="t" style="left:143.00px;top:340.84px;font-size:10px;line-height:10px;color:#f90;">P</span><span class="t" style="left:151.90px;top:342.22px;font-size:21.6px;line-height:21.6px;color:#f90;letter-spacing:0.109px;">1:20.2</span><span class="t" style="left:262.50px;top:340.84px;font-size:10px;line-height:10px;color:#f90;">N</span><span class="t" style="left:271.50px;top:342.22px;font-size:21.6px;line-height:21.6px;color:#f90;letter-spacing:0.089px;">2:41.5</span><span class="t" style="left:643.70px;top:340.84px;font-size:10px;line-height:10px;color:#f30;letter-spacing:0.760px;">OL</span><span class="t" style="left:660.00px;top:342.22px;font-size:21.6px;line-height:21.6px;color:#f30;letter-spacing:0.191px;">-2:24</span>
<!-- grid -->
<div class="a" style="left:33px;top:368px;width:1.3px;height:376px;background:#666;"></div><div class="a" style="left:145.3px;top:368px;width:1.5px;height:45px;background:#666;"></div><div class="a" style="left:10px;top:412.6px;width:228.3px;height:1.5px;background:#666;"></div><span class="t" style="left:37.50px;top:384.42px;font-size:12.5px;line-height:12.5px;color:#ddd;letter-spacing:-0.087px;">Player</span><span class="t" style="left:230.30px;top:384.42px;font-size:12.5px;line-height:12.5px;color:#ddd;">#</span><div class="a" style="left:75px;top:413.8px;width:163.3px;height:54.4px;background:#f63;"></div><div class="a" style="left:75px;top:468.8px;width:163.3px;height:54.4px;background:#69f;"></div><div class="a" style="left:75px;top:523.8px;width:163.3px;height:54.4px;background:#9f9;"></div><div class="a" style="left:34px;top:413.8px;width:41px;height:54.4px;background:#666;"></div><div class="a" style="left:10px;top:467.5px;width:228.3px;height:1.3px;background:#666;"></div><div class="a" style="left:10px;top:522.5px;width:228.3px;height:1.3px;background:#666;"></div><div class="a" style="left:10px;top:577.5px;width:228.3px;height:1.3px;background:#666;"></div><div class="a" style="left:10px;top:632.5px;width:228.3px;height:1.3px;background:#666;"></div><div class="a" style="left:10px;top:687.5px;width:228.3px;height:1.3px;background:#666;"></div><div class="a" style="left:10px;top:742.8px;width:228.3px;height:1.3px;background:#666;"></div><span class="t" style="left:79.30px;top:428.14px;font-size:27.6px;line-height:27.6px;color:#000;font-weight:bold;">A</span><span class="t" style="left:78.70px;top:483.14px;font-size:27.6px;line-height:27.6px;color:#000;font-weight:bold;">C</span><span class="t" style="left:78.70px;top:538.14px;font-size:27.6px;line-height:27.6px;color:#000;font-weight:bold;">B</span><div class="a" style="left:200px;top:413px;width:38.3px;height:340px;overflow:hidden"><span class="t" style="left:31.30px;top:22.44px;font-size:13.3px;line-height:13.3px;color:#222;">1</span><span class="t" style="left:31.30px;top:77.44px;font-size:13.3px;line-height:13.3px;color:#222;">2</span><span class="t" style="left:31.30px;top:132.44px;font-size:13.3px;line-height:13.3px;color:#222;">3</span><span class="t" style="left:30.80px;top:187.44px;font-size:13.3px;line-height:13.3px;color:#ddd;">4</span><span class="t" style="left:30.80px;top:242.44px;font-size:13.3px;line-height:13.3px;color:#ddd;">5</span><span class="t" style="left:30.80px;top:297.44px;font-size:13.3px;line-height:13.3px;color:#ddd;">6</span></div><svg class="a" style="left:19.5px;top:436.5px;" width="6" height="10" viewBox="0 0 6 10"><path d="M.3 .3L5.3 4.7 .3 9.2z" fill="#999"/></svg><svg class="a" style="left:46.5px;top:433.5px;" width="15" height="16" viewBox="0 0 15 16"><defs><linearGradient id="gp" x1="0" y1="0" x2="0" y2="1"><stop offset="0" stop-color="#9e9"/><stop offset="1" stop-color="#4b4"/></linearGradient></defs><path d="M.5 .5L14.8 8 .5 15.5z" fill="url(#gp)"/></svg><div class="a" style="left:47.5px;top:489.7px;width:5.2px;height:13.6px;background:#f66;"></div><div class="a" style="left:57px;top:489.7px;width:5.2px;height:13.6px;background:#f66;"></div><div class="a" style="left:47.5px;top:544.7px;width:5.2px;height:13.6px;background:#f66;"></div><div class="a" style="left:57px;top:544.7px;width:5.2px;height:13.6px;background:#f66;"></div><svg class="a" style="left:44px;top:596px;" width="16" height="21" viewBox="0 0 16 21"><path d="M8.6 1V14" stroke="#35c" stroke-width="1.5"/><path d="M8.6 1C10 5 15.5 6.5 12.5 12.5C13.5 8 10.5 7 8.6 6.5z" fill="#47e"/><ellipse cx="5.5" cy="15.5" rx="4" ry="3" fill="#36e"/></svg><svg class="a" style="left:44px;top:651px;" width="16" height="21" viewBox="0 0 16 21"><path d="M8.6 1V14" stroke="#35c" stroke-width="1.5"/><path d="M8.6 1C10 5 15.5 6.5 12.5 12.5C13.5 8 10.5 7 8.6 6.5z" fill="#47e"/><ellipse cx="5.5" cy="15.5" rx="4" ry="3" fill="#36e"/></svg><svg class="a" style="left:45px;top:706.5px;" width="18" height="17" viewBox="0 0 18 17"><path d="M9 .8L11.6 6.1 17.4 6.9 13.2 11 14.2 16.7 9 14 3.8 16.7 4.8 11 .6 6.9 6.4 6.1z" fill="#fc2" stroke="#fa0" stroke-width=".8"/></svg>
<!-- settings -->
<svg class="a" style="left:261px;top:390px;" width="16" height="18" viewBox="0 0 16 18"><rect x=".5" y=".5" width="15" height="17" fill="#8af" stroke="#bcd" stroke-width="1"/><rect x="2.5" y="2.5" width="4" height="3" fill="#bdf"/><rect x="8" y="2.5" width="5.5" height="3" fill="#bdf"/><rect x="3" y="7" width="9" height="2" fill="#9cf"/><path d="M1 16.5L5 11.5H11L15 16.5z" fill="#ccc"/><rect x="1" y="14.5" width="14" height="2.5" fill="#bbb"/><rect x="6.5" y="12.5" width="3" height="3" fill="#fff"/></svg><span class="t" style="left:282.60px;top:391.22px;font-size:19px;line-height:19px;color:#f90;letter-spacing:-0.442px;">Settings and Options</span><span class="t" style="left:1242.50px;top:394.12px;font-size:12.5px;line-height:12.5px;color:#ddd;font-weight:bold;">?</span><svg class="a" style="left:1267.5px;top:395px;" width="10" height="9" viewBox="0 0 10 9"><path d="M1 1L9 8M9 1L1 8" stroke="#ddd" stroke-width="1.8"/></svg><span class="t" style="left:277.30px;top:451.42px;font-size:12.5px;line-height:12.5px;color:#ddd;font-weight:bold;letter-spacing:0.902px;">Category</span><div class="a" style="left:271.2px;top:473.4px;width:179.8px;height:1.2px;background:#5a5a5a;"></div><svg class="a" style="left:279.5px;top:482px;" width="18" height="18" viewBox="0 0 18 18"><path d="M6.5 3.5L14 1.5V11" fill="none" stroke="#69e" stroke-width="1.6"/><path d="M6.5 3.5V14" stroke="#69e" stroke-width="1.4"/><ellipse cx="4.5" cy="14.5" rx="2.6" ry="2" fill="#58e"/><ellipse cx="12" cy="11.8" rx="2.4" ry="1.8" fill="#58e"/></svg><span class="t" style="left:303.30px;top:485.42px;font-size:12.5px;line-height:12.5px;color:#ddd;letter-spacing:-0.143px;">General/Audio</span><svg class="a" style="left:279.5px;top:511.77px;" width="18" height="18" viewBox="0 0 18 18"><path d="M1 3L6 1.5V15.5L1 17z" fill="#db5"/><path d="M6 2.5L13 1V15L6 16.5z" fill="#fd7"/><path d="M10 8H16V16H10z" fill="#c93"/><path d="M10 8L13 6.5 16 8z" fill="#ea4"/></svg><span class="t" style="left:303.30px;top:515.19px;font-size:12.5px;line-height:12.5px;color:#ddd;letter-spacing:-0.131px;">Folders/Libraries</span><svg class="a" style="left:279.5px;top:541.54px;" width="18" height="18" viewBox="0 0 18 18"><path d="M1 9L9 1 16 8 8 16z" fill="#69c"/><path d="M3 9L9 3 14 8 8 14z" fill="#cde"/><path d="M1 3L5 1M2 6L7 3.5" stroke="#eef" stroke-width="1.3"/><path d="M7 14L14 16" stroke="#99c" stroke-width="2"/></svg><span class="t" style="left:303.30px;top:544.96px;font-size:12.5px;line-height:12.5px;color:#ddd;letter-spacing:-0.014px;">MetaData/WaveForm</span><svg class="a" style="left:279.5px;top:571.31px;" width="18" height="18" viewBox="0 0 18 18"><path d="M2.5 .8H12L15.5 4.3V17.2H2.5z" fill="#fff" stroke="#aaa" stroke-width=".7"/><path d="M12 .8V4.3H15.5z" fill="#ccc"/><path d="M5 6L13 10.5 5 15z" fill="#2b2"/></svg><span class="t" style="left:303.30px;top:574.73px;font-size:12.5px;line-height:12.5px;color:#ddd;letter-spacing:-0.140px;">Playlist Settings</span><svg class="a" style="left:279.5px;top:601.08px;" width="18" height="18" viewBox="0 0 18 18"><rect x="1" y="7" width="16" height="9.5" fill="#bbd" stroke="#eef" stroke-width=".8"/><rect x="5" y="3" width="8" height="4" fill="#222"/><path d="M2 10H16M2 13H16" stroke="#669" stroke-width="1.2"/></svg><span class="t" style="left:303.30px;top:604.50px;font-size:12.5px;line-height:12.5px;color:#ddd;letter-spacing:-0.084px;">Player Settings</span><svg class="a" style="left:279.5px;top:630.85px;" width="18" height="18" viewBox="0 0 18 18"><path d="M0.5 15H5C8 15 8 5.5 12 5.5H17.5" fill="none" stroke="#3c3" stroke-width="2.2"/><path d="M1 3.5L16.5 16" stroke="#e33" stroke-width="2.4"/></svg><span class="t" style="left:303.30px;top:634.27px;font-size:12.5px;line-height:12.5px;color:#ddd;letter-spacing:-0.126px;">Mixing/Fading</span><svg class="a" style="left:279.5px;top:660.62px;" width="18" height="18" viewBox="0 0 18 18"><circle cx="9" cy="9" r="8" fill="#d33" stroke="#ccc" stroke-width="1.6"/><ellipse cx="8" cy="6" rx="4" ry="2.4" fill="#f88" opacity=".5"/></svg><span class="t" style="left:303.30px;top:664.04px;font-size:12.5px;line-height:12.5px;color:#ddd;letter-spacing:-0.199px;">Encoding/Recording</span><svg class="a" style="left:279.5px;top:690.39px;" width="18" height="18" viewBox="0 0 18 18"><path d="M5 1.5H14.5V15H5z" fill="#c63"/><path d="M5 1.5L11 3.5V17L5 15z" fill="#e84"/><circle cx="9.5" cy="10" r=".9" fill="#420"/></svg><span class="t" style="left:303.30px;top:693.81px;font-size:12.5px;line-height:12.5px;color:#ddd;letter-spacing:-0.061px;">Logging/History</span><svg class="a" style="left:279.5px;top:720.16px;" width="18" height="18" viewBox="0 0 18 18"><path d="M12 .5L3 9.5H8L4 17.5 15 7H9.5z" fill="#fc3" stroke="#c93" stroke-width=".6"/></svg><span class="t" style="left:303.30px;top:723.58px;font-size:12.5px;line-height:12.5px;color:#ddd;letter-spacing:-0.243px;">Events/Commands</span><svg class="a" style="left:279.5px;top:749.93px;" width="18" height="18" viewBox="0 0 18 18"><rect x="1" y="1.5" width="10" height="11" fill="#bbb" stroke="#eee" stroke-width=".8"/><circle cx="6" cy="7" r="3" fill="#666"/><rect x="9.5" y="5" width="5" height="8" rx="2.5" fill="#ddd" stroke="#669" stroke-width=".8"/><path d="M8 11C8 16 16 16 16 11M12 15V17.5" fill="none" stroke="#99c" stroke-width="1.2"/></svg><span class="t" style="left:303.30px;top:753.35px;font-size:12.5px;line-height:12.5px;color:#ddd;letter-spacing:0.482px;">Input/Output</span><svg class="a" style="left:279.5px;top:779.7px;" width="18" height="18" viewBox="0 0 18 18"><rect x="1" y="2" width="5" height="3.4" fill="#ccf"/><rect x="1" y="7.6" width="5" height="3.4" fill="#ccf"/><rect x="1" y="13.2" width="5" height="3.4" fill="#ccf"/><rect x="13" y="2" width="4.5" height="3.4" fill="#58f"/><rect x="13" y="13.2" width="4.5" height="3.4" fill="#58f"/><path d="M6 3.7H9V14.9H6M9 9.3H6M9 5L13 3.7M9 14L13 14.9" fill="none" stroke="#111" stroke-width="1.1"/></svg><span class="t" style="left:303.30px;top:783.12px;font-size:12.5px;line-height:12.5px;color:#ddd;letter-spacing:-0.048px;">Routing</span><svg class="a" style="left:279.5px;top:809.47px;" width="18" height="18" viewBox="0 0 18 18"><rect x="5" y="1" width="8" height="8" fill="#bcd" stroke="#dde" stroke-width=".8"/><path d="M2 2V7M16 2V7" stroke="#9ab" stroke-width="1.6"/><path d="M9 9V15M5 17L9 14 13 17" fill="none" stroke="#abc" stroke-width="1.6"/></svg><span class="t" style="left:303.30px;top:812.89px;font-size:12.5px;line-height:12.5px;color:#ddd;letter-spacing:-0.236px;">GPIO/Remoting</span><svg class="a" style="left:279.5px;top:839.24px;" width="18" height="18" viewBox="0 0 18 18"><path d="M3 4Q10 -2 17 4" fill="none" stroke="#6c1" stroke-width="2"/><path d="M6 7.5Q10.5 3 15 7.5" fill="none" stroke="#6c1" stroke-width="1.8"/><path d="M1.5 7L7 8.5V17.5L1.5 16z" fill="#49c"/><path d="M7 8.5L11 7V16L7 17.5z" fill="#9df"/><path d="M11 11L14 10V15L11 16z" fill="#5ad"/></svg><span class="t" style="left:303.30px;top:842.66px;font-size:12.5px;line-height:12.5px;color:#ddd;letter-spacing:-0.172px;">Streaming</span><svg class="a" style="left:279.5px;top:869.01px;" width="18" height="18" viewBox="0 0 18 18"><circle cx="9" cy="9" r="7.4" fill="#222" stroke="#ddd" stroke-width="1.8"/><path d="M9 4.2V9.3L12.3 11.5" fill="none" stroke="#eee" stroke-width="1.7"/></svg><span class="t" style="left:303.30px;top:872.43px;font-size:12.5px;line-height:12.5px;color:#ddd;letter-spacing:-0.204px;">Scripts/Scheduler</span><div class="a" style="left:272px;top:892.7px;width:178px;height:29.6px;background:#f90;"></div><svg class="a" style="left:279.5px;top:898.78px;" width="18" height="18" viewBox="0 0 18 18"><path d="M9 16L0 6 3.5 2.5z" fill="#33c"/><path d="M9 16L3.5 2.5 8 1z" fill="#d22"/><path d="M9 16L8 1 12.5 2z" fill="#f80"/><path d="M9 16L12.5 2 16.5 5z" fill="#fc0"/><path d="M9 16L16.5 5 18 10z" fill="#3a3"/><circle cx="13.5" cy="15" r="2.2" fill="#eee"/></svg><span class="t" style="left:303.30px;top:902.20px;font-size:12.5px;line-height:12.5px;color:#7a2a00;letter-spacing:-0.285px;">Look and Feel</span><svg class="a" style="left:279.5px;top:928.55px;" width="18" height="18" viewBox="0 0 18 18"><rect x="1" y="3" width="14" height="13" fill="#69d" stroke="#dde" stroke-width="1.2"/><rect x="3" y="5" width="8" height="8" fill="#ccd"/><path d="M6 12L14 2 16.5 4 8.5 13.5 5.5 14z" fill="#c84"/><path d="M14 2L16.5 4 17.5 2.5 15.5 1z" fill="#333"/></svg><span class="t" style="left:303.30px;top:931.97px;font-size:12.5px;line-height:12.5px;color:#ddd;letter-spacing:0.263px;">More Stuff</span><div class="a" style="left:457.5px;top:439.5px;width:815px;height:590.5px;border:1.5px solid #5e5e5e;"></div><div class="a" style="left:462.3px;top:456px;width:801px;height:400.3px;border:1.5px solid #5e5e5e;"></div><div class="a" style="left:471px;top:454px;width:100px;height:5px;background:#333;"></div><span class="t" style="left:475.90px;top:451.32px;font-size:12.5px;line-height:12.5px;color:#777;font-weight:bold;letter-spacing:0.396px;">Look And Feel</span><span class="t" style="left:467.20px;top:473.92px;font-size:12.5px;line-height:12.5px;color:#ddd;letter-spacing:-0.195px;">General</span><div class="a" style="left:513.6px;top:478.3px;width:743.2px;height:1.4px;background:#5e5e5e;"></div><div class="a" style="left:468px;top:495.5px;width:17px;height:17px;background:#333;border:1px solid #6a6a6a;"></div><svg class="a" style="left:468px;top:495.5px;" width="17" height="17" viewBox="0 0 17 17"><path d="M3.2 8.2L6.8 13 14 3.6" fill="none" stroke="#e4e4e4" stroke-width="2.1"/></svg><span class="t" style="left:487.80px;top:498.62px;font-size:12.5px;line-height:12.5px;color:#ddd;letter-spacing:-0.127px;">Show Tool Tips</span><span class="t" style="left:576.20px;top:498.62px;font-size:12.5px;line-height:12.5px;color:#ddd;letter-spacing:0.763px;">after:</span><div class="a" style="left:616.8px;top:493.5px;width:47.5px;height:22.6px;background:#333;border:1px solid #6a6a6a;"></div><div class="a" style="left:647.3px;top:494.5px;width:1px;height:20.6px;background:#6a6a6a;"></div><span class="t" style="left:636.65px;top:499.22px;font-size:12.5px;line-height:12.5px;color:#ddd;">2</span><svg class="a" style="left:651.5px;top:496.5px;" width="9" height="17" viewBox="0 0 9 17"><path d="M.5 5.5L4.5 1 8.5 5.5z M.5 11.5L4.5 16 8.5 11.5z" fill="#ddd"/></svg><span class="t" style="left:669.80px;top:498.92px;font-size:12.5px;line-height:12.5px;color:#ddd;letter-spacing:-0.075px;">sec.</span><div class="a" style="left:616.8px;top:523.3px;width:47.5px;height:22.6px;background:#333;border:1px solid #6a6a6a;"></div><div class="a" style="left:647.3px;top:524.3px;width:1px;height:20.6px;background:#6a6a6a;"></div><span class="t" style="left:629.70px;top:529.02px;font-size:12.5px;line-height:12.5px;color:#ddd;">10</span><svg class="a" style="left:651.5px;top:526.3px;" width="9" height="17" viewBox="0 0 9 17"><path d="M.5 5.5L4.5 1 8.5 5.5z M.5 11.5L4.5 16 8.5 11.5z" fill="#ddd"/></svg><span class="t" style="left:669.80px;top:528.72px;font-size:12.5px;line-height:12.5px;color:#ddd;letter-spacing:-0.075px;">sec.</span><div class="a" style="left:728px;top:495.5px;width:17px;height:17px;background:#333;border:1px solid #6a6a6a;"></div><svg class="a" style="left:728px;top:495.5px;" width="17" height="17" viewBox="0 0 17 17"><path d="M3.2 8.2L6.8 13 14 3.6" fill="none" stroke="#e4e4e4" stroke-width="2.1"/></svg><span class="t" style="left:747.50px;top:498.62px;font-size:12.5px;line-height:12.5px;color:#ddd;letter-spacing:0.040px;">Load Layout on Startup</span><div class="a" style="left:918px;top:495.5px;width:17px;height:17px;background:#333;border:1px solid #6a6a6a;"></div><svg class="a" style="left:918px;top:495.5px;" width="17" height="17" viewBox="0 0 17 17"><path d="M3.2 8.2L6.8 13 14 3.6" fill="none" stroke="#e4e4e4" stroke-width="2.1"/></svg><span class="t" style="left:937.50px;top:498.62px;font-size:12.5px;line-height:12.5px;color:#ddd;letter-spacing:0.006px;">Save Layout on Exit</span><div class="a" style="left:1125.3px;top:492px;width:131.8px;height:23px;background:#333;border:1px solid #6a6a6a;"></div><span class="t" style="left:1144.50px;top:498.12px;font-size:12.5px;line-height:12.5px;color:#555;letter-spacing:-0.210px;">Save Layout To...</span><span class="t" style="left:588.90px;top:527.92px;font-size:12.5px;line-height:12.5px;color:#ddd;letter-spacing:0.913px;">for:</span><div class="a" style="left:728px;top:524.5px;width:17px;height:17px;background:#333;border:1px solid #6a6a6a;"></div><span class="t" style="left:747.50px;top:527.92px;font-size:12.5px;line-height:12.5px;color:#ddd;letter-spacing:-0.165px;">Suppress Errors</span><div class="a" style="left:847px;top:524.5px;width:17px;height:17px;background:#333;border:1px solid #6a6a6a;"></div><svg class="a" style="left:847px;top:524.5px;" width="17" height="17" viewBox="0 0 17 17"><path d="M3.2 8.2L6.8 13 14 3.6" fill="none" stroke="#e4e4e4" stroke-width="2.1"/></svg><span class="t" style="left:866.50px;top:527.92px;font-size:12.5px;line-height:12.5px;color:#ddd;letter-spacing:-0.185px;">Show Notifications when Minimized</span><span class="t" style="left:1077.00px;top:528.42px;font-size:12.5px;line-height:12.5px;color:#ddd;letter-spacing:0.275px;">Reset:</span><div class="a" style="left:1125.3px;top:522px;width:63px;height:23px;background:#333;border:1px solid #6a6a6a;"></div><span class="t" style="left:1137.50px;top:528.12px;font-size:12.5px;line-height:12.5px;color:#ddd;letter-spacing:0.273px;">Config</span><div class="a" style="left:1194px;top:522px;width:63px;height:23px;background:#333;border:1px solid #6a6a6a;"></div><span class="t" style="left:1205.00px;top:528.12px;font-size:12.5px;line-height:12.5px;color:#ddd;letter-spacing:0.494px;">Layout</span><div class="a" style="left:1125.3px;top:551.8px;width:131.8px;height:23px;background:#333;border:1px solid #6a6a6a;"></div><span class="t" style="left:1146.50px;top:557.92px;font-size:12.5px;line-height:12.5px;color:#ddd;letter-spacing:0.171px;">Restore Layout</span><span class="t" style="left:490.80px;top:576.12px;font-size:12.5px;line-height:12.5px;color:#ddd;letter-spacing:-0.071px;">Ribbon Style:</span><div class="a" style="left:572.3px;top:570px;width:141px;height:23px;background:#333;border:1px solid #6a6a6a;"></div><div class="a" style="left:696.3px;top:571px;width:1px;height:21px;background:#6a6a6a;"></div><svg class="a" style="left:700.8px;top:579px;" width="9" height="6" viewBox="0 0 9 6"><path d="M.3 .5H8.3L4.3 5z" fill="#ddd"/></svg><span class="t" style="left:575.80px;top:576.12px;font-size:12.5px;line-height:12.5px;color:#ddd;letter-spacing:0.197px;">Office2007</span><span class="t" style="left:738.50px;top:576.12px;font-size:12.5px;line-height:12.5px;color:#ddd;letter-spacing:-0.073px;">Active Skin:</span><div class="a" style="left:810.4px;top:570px;width:244px;height:23px;background:#333;border:1px solid #6a6a6a;"></div><div class="a" style="left:1037.4px;top:571px;width:1px;height:21px;background:#6a6a6a;"></div><svg class="a" style="left:1041.9px;top:579px;" width="9" height="6" viewBox="0 0 9 6"><path d="M.3 .5H8.3L4.3 5z" fill="#ddd"/></svg><span class="t" style="left:813.90px;top:576.12px;font-size:12.5px;line-height:12.5px;color:#ddd;letter-spacing:-0.095px;">Metropolis Dark</span><span class="t" style="left:468.50px;top:605.82px;font-size:12.5px;line-height:12.5px;color:#ddd;letter-spacing:-0.006px;">Context Ribbons:</span><div class="a" style="left:570.3px;top:602.3px;width:17px;height:17px;background:#333;border:1px solid #6a6a6a;"></div><svg class="a" style="left:570.3px;top:602.3px;" width="17" height="17" viewBox="0 0 17 17"><path d="M3.2 8.2L6.8 13 14 3.6" fill="none" stroke="#e4e4e4" stroke-width="2.1"/></svg><span class="t" style="left:589.80px;top:605.82px;font-size:12.5px;line-height:12.5px;color:#ddd;letter-spacing:-0.120px;">Show Ribbon Category in Caption</span><div class="a" style="left:810.4px;top:602.3px;width:17px;height:17px;background:#333;border:1px solid #6a6a6a;"></div><span class="t" style="left:830.50px;top:605.82px;font-size:12.5px;line-height:12.5px;color:#ddd;">Touch UI</span><div class="a" style="left:572.3px;top:629.6px;width:17px;height:17px;background:#333;border:1px solid #6a6a6a;"></div><span class="t" style="left:592.30px;top:632.92px;font-size:12.5px;line-height:12.5px;color:#ddd;letter-spacing:-0.023px;">Align Context Pages to Right</span><div class="a" style="left:810.4px;top:627.3px;width:132px;height:23px;background:#333;border:1px solid #6a6a6a;"></div><span class="t" style="left:839.50px;top:633.42px;font-size:12.5px;line-height:12.5px;color:#ddd;letter-spacing:0.086px;">Font Sizes...</span><div class="a" style="left:1125.3px;top:627.3px;width:131.8px;height:23px;background:#333;border:1px solid #6a6a6a;"></div><span class="t" style="left:1136.00px;top:633.42px;font-size:12.5px;line-height:12.5px;color:#ddd;letter-spacing:0.360px;">Restore Defaults...</span><span class="t" style="left:467.20px;top:663.92px;font-size:12.5px;line-height:12.5px;color:#ddd;letter-spacing:-0.284px;">Colors</span><div class="a" style="left:505px;top:668.3px;width:751.8px;height:1.4px;background:#5e5e5e;"></div><span class="t" style="left:467.20px;top:685.82px;font-size:12.5px;line-height:12.5px;color:#ddd;letter-spacing:-0.008px;">Players:</span><div class="a" style="left:515px;top:689.6px;width:198px;height:1.3px;background:#5e5e5e;"></div><span class="t" style="left:728.90px;top:685.82px;font-size:12.5px;line-height:12.5px;color:#ddd;letter-spacing:-0.179px;">Playlist Elements:</span><div class="a" style="left:827.7px;top:689.6px;width:123.3px;height:1.3px;background:#5e5e5e;"></div><span class="t" style="left:967.50px;top:685.82px;font-size:12.5px;line-height:12.5px;color:#ddd;letter-spacing:-0.023px;">Other Elements:</span><div class="a" style="left:1060.2px;top:689.6px;width:129.3px;height:1.3px;background:#5e5e5e;"></div><span class="t" style="left:497.00px;top:711.42px;font-size:12.5px;line-height:12.5px;color:#ddd;letter-spacing:-0.134px;">DJ Player A:</span><div class="a" style="left:572.3px;top:705.3px;width:141px;height:23px;background:#333;border:1px solid #6a6a6a;"></div><div class="a" style="left:696.3px;top:706.3px;width:1px;height:21px;background:#6a6a6a;"></div><svg class="a" style="left:700.8px;top:714.3px;" width="9" height="6" viewBox="0 0 9 6"><path d="M.3 .5H8.3L4.3 5z" fill="#ddd"/></svg><div class="a" style="left:578.6px;top:710.5px;width:25.8px;height:12px;background:#f63;border:1px solid #aaa;"></div><span class="t" style="left:607.80px;top:711.42px;font-size:12.5px;line-height:12.5px;color:#ddd;letter-spacing:0.202px;">Tomato</span><span class="t" style="left:498.00px;top:741.12px;font-size:12.5px;line-height:12.5px;color:#ddd;letter-spacing:-0.288px;">DJ Player B:</span><div class="a" style="left:572.3px;top:735px;width:141px;height:23px;background:#333;border:1px solid #6a6a6a;"></div><div class="a" style="left:696.3px;top:736px;width:1px;height:21px;background:#6a6a6a;"></div><svg class="a" style="left:700.8px;top:744px;" width="9" height="6" viewBox="0 0 9 6"><path d="M.3 .5H8.3L4.3 5z" fill="#ddd"/></svg><div class="a" style="left:578.6px;top:740.2px;width:25.8px;height:12px;background:#9f9;border:1px solid #aaa;"></div><span class="t" style="left:607.80px;top:741.12px;font-size:12.5px;line-height:12.5px;color:#ddd;letter-spacing:-0.150px;">LightGreen</span><span class="t" style="left:497.00px;top:770.82px;font-size:12.5px;line-height:12.5px;color:#ddd;letter-spacing:-0.260px;">DJ Player C:</span><div class="a" style="left:572.3px;top:764.7px;width:141px;height:23px;background:#333;border:1px solid #6a6a6a;"></div><div class="a" style="left:696.3px;top:765.7px;width:1px;height:21px;background:#6a6a6a;"></div><svg class="a" style="left:700.8px;top:773.7px;" width="9" height="6" viewBox="0 0 9 6"><path d="M.3 .5H8.3L4.3 5z" fill="#ddd"/></svg><div class="a" style="left:578.6px;top:769.9px;width:25.8px;height:12px;background:#69f;border:1px solid #aaa;"></div><span class="t" style="left:607.80px;top:770.82px;font-size:12.5px;line-height:12.5px;color:#ddd;letter-spacing:-0.035px;">CornflowerBlue</span><span class="t" style="left:497.00px;top:800.52px;font-size:12.5px;line-height:12.5px;color:#ddd;letter-spacing:-0.260px;">DJ Player D:</span><div class="a" style="left:572.3px;top:794.4px;width:141px;height:23px;background:#333;border:1px solid #6a6a6a;"></div><div class="a" style="left:696.3px;top:795.4px;width:1px;height:21px;background:#6a6a6a;"></div><svg class="a" style="left:700.8px;top:803.4px;" width="9" height="6" viewBox="0 0 9 6"><path d="M.3 .5H8.3L4.3 5z" fill="#ddd"/></svg><div class="a" style="left:578.6px;top:799.6px;width:25.8px;height:12px;background:#ff0;border:1px solid #aaa;"></div><span class="t" style="left:607.80px;top:800.52px;font-size:12.5px;line-height:12.5px;color:#ddd;letter-spacing:-0.135px;">Yellow</span><span class="t" style="left:476.20px;top:830.32px;font-size:12.5px;line-height:12.5px;color:#ddd;letter-spacing:-0.011px;">Standby Player:</span><div class="a" style="left:572.3px;top:824.2px;width:141px;height:23px;background:#333;border:1px solid #6a6a6a;"></div><div class="a" style="left:696.3px;top:825.2px;width:1px;height:21px;background:#6a6a6a;"></div><svg class="a" style="left:700.8px;top:833.2px;" width="9" height="6" viewBox="0 0 9 6"><path d="M.3 .5H8.3L4.3 5z" fill="#ddd"/></svg><div class="a" style="left:578.6px;top:829.4px;width:25.8px;height:12px;background:#ccc;border:1px solid #aaa;"></div><span class="t" style="left:607.80px;top:830.32px;font-size:12.5px;line-height:12.5px;color:#ddd;letter-spacing:-0.149px;">LightGray</span><span class="t" style="left:775.20px;top:711.42px;font-size:12.5px;line-height:12.5px;color:#ddd;letter-spacing:0.869px;">Info:</span><div class="a" style="left:810.4px;top:705.3px;width:141px;height:23px;background:#333;border:1px solid #6a6a6a;"></div><div class="a" style="left:934.4px;top:706.3px;width:1px;height:21px;background:#6a6a6a;"></div><svg class="a" style="left:938.9px;top:714.3px;" width="9" height="6" viewBox="0 0 9 6"><path d="M.3 .5H8.3L4.3 5z" fill="#ddd"/></svg><div class="a" style="left:816.7px;top:710.5px;width:25.8px;height:12px;background:#c9c;border:1px solid #aaa;"></div><span class="t" style="left:845.90px;top:711.42px;font-size:12.5px;line-height:12.5px;color:#ddd;letter-spacing:-0.660px;">Plum</span><span class="t" style="left:751.00px;top:741.12px;font-size:12.5px;line-height:12.5px;color:#ddd;letter-spacing:-0.508px;">FTE/TUS:</span><div class="a" style="left:810.4px;top:735px;width:141px;height:23px;background:#333;border:1px solid #6a6a6a;"></div><div class="a" style="left:934.4px;top:736px;width:1px;height:21px;background:#6a6a6a;"></div><svg class="a" style="left:938.9px;top:744px;" width="9" height="6" viewBox="0 0 9 6"><path d="M.3 .5H8.3L4.3 5z" fill="#ddd"/></svg><div class="a" style="left:816.7px;top:740.2px;width:25.8px;height:12px;background:#933;border:1px solid #aaa;"></div><span class="t" style="left:845.90px;top:741.12px;font-size:12.5px;line-height:12.5px;color:#ddd;letter-spacing:-0.053px;">Firebrick</span><span class="t" style="left:761.10px;top:770.82px;font-size:12.5px;line-height:12.5px;color:#ddd;letter-spacing:0.034px;">Played:</span><div class="a" style="left:810.4px;top:764.7px;width:141px;height:23px;background:#333;border:1px solid #6a6a6a;"></div><div class="a" style="left:934.4px;top:765.7px;width:1px;height:21px;background:#6a6a6a;"></div><svg class="a" style="left:938.9px;top:773.7px;" width="9" height="6" viewBox="0 0 9 6"><path d="M.3 .5H8.3L4.3 5z" fill="#ddd"/></svg><div class="a" style="left:816.7px;top:769.9px;width:25.8px;height:12px;background:#666;border:1px solid #aaa;"></div><span class="t" style="left:845.90px;top:770.82px;font-size:12.5px;line-height:12.5px;color:#ddd;letter-spacing:-0.384px;">DimGray</span><span class="t" style="left:732.50px;top:800.52px;font-size:12.5px;line-height:12.5px;color:#ddd;letter-spacing:0.157px;">With Option:</span><div class="a" style="left:810.4px;top:794.4px;width:141px;height:23px;background:#333;border:1px solid #6a6a6a;"></div><div class="a" style="left:934.4px;top:795.4px;width:1px;height:21px;background:#6a6a6a;"></div><svg class="a" style="left:938.9px;top:803.4px;" width="9" height="6" viewBox="0 0 9 6"><path d="M.3 .5H8.3L4.3 5z" fill="#ddd"/></svg><div class="a" style="left:816.7px;top:799.6px;width:25.8px;height:12px;background:#933;border:1px solid #aaa;"></div><span class="t" style="left:845.90px;top:800.52px;font-size:12.5px;line-height:12.5px;color:#ddd;letter-spacing:-0.053px;">Firebrick</span><div class="a" style="left:810.4px;top:824.2px;width:141px;height:23px;background:#333;border:1px solid #6a6a6a;"></div><span class="t" style="left:823.50px;top:830.32px;font-size:12.5px;line-height:12.5px;color:#ddd;letter-spacing:0.019px;">MediaType Colors...</span><span class="t" style="left:985.80px;top:711.42px;font-size:12.5px;line-height:12.5px;color:#ddd;letter-spacing:-0.506px;">Find GSH:</span><div class="a" style="left:1047.6px;top:705.3px;width:141px;height:23px;background:#333;border:1px solid #6a6a6a;"></div><div class="a" style="left:1171.6px;top:706.3px;width:1px;height:21px;background:#6a6a6a;"></div><svg class="a" style="left:1176.1px;top:714.3px;" width="9" height="6" viewBox="0 0 9 6"><path d="M.3 .5H8.3L4.3 5z" fill="#ddd"/></svg><div class="a" style="left:1053.9px;top:710.5px;width:25.8px;height:12px;background:#933;border:1px solid #aaa;"></div><span class="t" style="left:1083.10px;top:711.42px;font-size:12.5px;line-height:12.5px;color:#ddd;letter-spacing:-0.053px;">Firebrick</span><div class="a" style="left:968.4px;top:826.3px;width:17px;height:17px;background:#333;border:1px solid #6a6a6a;"></div><svg class="a" style="left:968.4px;top:826.3px;" width="17" height="17" viewBox="0 0 17 17"><path d="M3.2 8.2L6.8 13 14 3.6" fill="none" stroke="#e4e4e4" stroke-width="2.1"/></svg><span class="t" style="left:988.20px;top:829.62px;font-size:12.5px;line-height:12.5px;color:#ddd;letter-spacing:-0.072px;">Colorize full row for Media Type Colors</span><svg class="a" style="left:0;top:0" width="1294" height="700"><path d="M1120.5 579 L1108 560 L1095.5 546.5 L1124 544.5 L1173 544.3 C1215 544 1250 541.5 1270 543.5 C1279 545 1281 552 1285 558 C1289 566 1294 572 1290 577 C1286 580 1240 578.5 1222 578.6 L1148 578.2 L1126 581" fill="none" stroke="#e51c1c" stroke-width="3.1" stroke-linecap="round" stroke-linejoin="round"/><path d="M1089.5 618.5 C1100 616 1120 610 1148 607.3 C1180 605 1230 605.5 1248 606.5 C1262 607.5 1268 612 1268.8 621 C1269 632 1266 641 1262.5 648 C1259 656 1254 659.5 1247 659 C1225 657 1195 653 1173 651.2 C1150 649 1130 648 1112 644.5 C1106 643 1107 632 1107.3 626 L1108.3 614" fill="none" stroke="#e51c1c" stroke-width="3.1" stroke-linecap="round" stroke-linejoin="round"/></svg>
<div class="a" style="left:1291px;top:0;width:3px;height:1034px;background:#fff"></div>
</body></html>
